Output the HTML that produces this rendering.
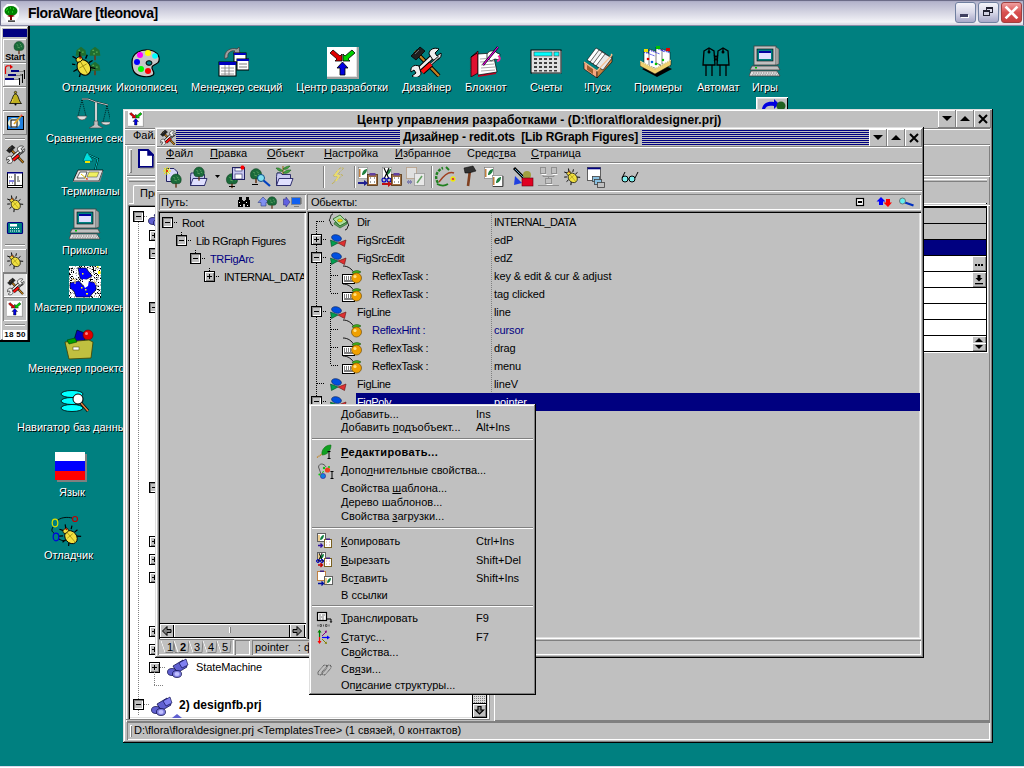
<!DOCTYPE html><html><head><meta charset="utf-8"><style>
*{box-sizing:border-box}
body{margin:0;width:1024px;height:768px;overflow:hidden;background:#008080;position:relative;font:11px "Liberation Sans",sans-serif;color:#000}
.a{position:absolute}
.g{background:#c0c0c0}
.w{background:#fff}
.r2{background:#c0c0c0;box-shadow:inset -1px -1px #000,inset 1px 1px #dfdfdf,inset -2px -2px #808080,inset 2px 2px #fff}
.r1{background:#c0c0c0;box-shadow:inset -1px -1px #808080,inset 1px 1px #fff}
.s1{box-shadow:inset 1px 1px #808080,inset -1px -1px #fff}
.s2{box-shadow:inset 1px 1px #808080,inset -1px -1px #fff,inset 2px 2px #000,inset -2px -2px #dfdfdf}
.t{white-space:nowrap;line-height:13px}
.dl{color:#fff;text-shadow:1px 1px 0 #000}
u{text-decoration:underline;text-underline-offset:1px;text-decoration-thickness:1px}
</style></head><body><div class="a" style="left:0;top:0;width:1024px;height:26px;background:linear-gradient(#9c9cb8 0,#b4b4cc 2px,#e6e6ee 18px,#f4f4f8 22px,#dcdce6 24px);box-shadow:inset 1px 1px #6c6c88,inset -1px -1px #6c6c88"></div>
<div class="a" style="left:0;top:25px;width:1024px;height:1px;background:#8a8aa6"></div>
<svg class="a" style="left:2px;top:3px" width="18" height="20" viewBox="0 0 18 20">
<polygon points="5,1 13,1 17,5 17,13 13,19 5,19 1,13 1,5" fill="#fff"/>
<ellipse cx="9" cy="8" rx="6.5" ry="5" fill="#008000"/>
<path d="M5 6h1M8 5h1M11 6h1M6 9h1M10 9h1M4 7h1" stroke="#3f3" stroke-width="1"/>
<path d="M5 13 Q9 11 13 13 L10 14 L10 17 L8 17 L8 14Z" fill="#800000"/>
<rect x="6" y="17.5" width="7" height="1.2" fill="#000"/>
</svg>
<div class="a t " style="left:28px;top:5px;font-size:14px;font-weight:bold;letter-spacing:-0.45px;line-height:16px">FloraWare [tleonova]</div>
<div class="a" style="left:955px;top:2px;width:21px;height:21px;border-radius:3px;border:1px solid #7080a0;background:linear-gradient(#f4f4fa,#d8d8e8 50%,#a8a8c8)"></div>
<div class="a" style="left:978px;top:2px;width:21px;height:21px;border-radius:3px;border:1px solid #7080a0;background:linear-gradient(#f4f4fa,#d8d8e8 50%,#a8a8c8)"></div>
<div class="a" style="left:1001px;top:2px;width:21px;height:21px;border-radius:3px;border:1px solid #a04040;background:linear-gradient(#f0a0a0,#d85050 50%,#c84040)"></div>
<div class="a" style="left:960px;top:14px;width:8px;height:3px;background:#404060;box-shadow:1px 1px #fff"></div>
<div class="a" style="left:986px;top:7px;width:7px;height:6px;border:1px solid #202030;border-top-width:2px"></div>
<div class="a" style="left:983px;top:10px;width:7px;height:6px;border:1px solid #202030;border-top-width:2px;background:#d0d0e0"></div>
<svg class="a" style="left:1001px;top:2px" width="21" height="21" viewBox="0 0 21 21"><path d="M5.5 5.5L15.5 15.5M15.5 5.5L5.5 15.5" stroke="#fff" stroke-width="2.6" stroke-linecap="square"/></svg>
<div class="a" style="left:0;top:26px;width:30px;height:316px;background:#c0c0c0;box-shadow:inset -2px -2px #000,inset 1px 1px #dfdfdf,inset -3px -3px #808080,inset 2px 2px #fff"></div>
<div class="a " style="left:3px;top:29px;width:24px;height:8px;background:#000080"></div>
<div class="a" style="left:3px;top:39px;width:24px;height:24px;background:#c0c0c0;box-shadow:inset -1px -1px #808080,inset 1px 1px #fff"></div>
<div class="a" style="left:3px;top:63px;width:24px;height:24px;background:#c0c0c0;box-shadow:inset -1px -1px #808080,inset 1px 1px #fff"></div>
<div class="a" style="left:3px;top:87px;width:24px;height:24px;background:#c0c0c0;box-shadow:inset -1px -1px #808080,inset 1px 1px #fff"></div>
<div class="a" style="left:3px;top:111px;width:24px;height:24px;background:#c0c0c0;box-shadow:inset -1px -1px #808080,inset 1px 1px #fff"></div>
<div class="a" style="left:5px;top:138px;width:20px;height:2px;box-shadow:inset 0 1px #808080,inset 0 -1px #fff"></div>
<div class="a" style="left:5px;top:244px;width:20px;height:2px;box-shadow:inset 0 1px #808080,inset 0 -1px #fff"></div>
<div class="a" style="left:3px;top:249px;width:24px;height:24px;background:#c0c0c0;box-shadow:inset -1px -1px #808080,inset 1px 1px #fff"></div>
<div class="a" style="left:3px;top:273px;width:24px;height:24px;background:#e2e2e2;box-shadow:inset 1px 1px #808080,inset -1px -1px #fff"></div>
<div class="a" style="left:3px;top:297px;width:24px;height:24px;background:#c0c0c0;box-shadow:inset 1px 1px #808080,inset -1px -1px #fff"></div>
<div class="a" style="left:5px;top:324px;width:20px;height:2px;box-shadow:inset 0 1px #808080,inset 0 -1px #fff"></div>
<div class="a" style="left:3px;top:330px;width:24px;height:10px;background:#fff"></div>
<div class="a t " style="left:3px;top:329px;font-size:8px;font-weight:bold;line-height:11px;width:24px;text-align:center;letter-spacing:0.3px">18 50</div>
<div class="a t " style="left:4px;top:52px;font-size:9px;font-weight:bold;line-height:10px;width:22px;text-align:center;letter-spacing:-0.2px">Start</div>
<svg class="a" style="left:72px;top:45px" width="32" height="32" viewBox="0 0 32 32"><g transform="translate(9,8) scale(0.9)"><rect x="-1" y="2" width="2" height="6" fill="#604020"/><path d="M0 -7 L5 -3 L6 3 L-6 3 L-5 -3Z" fill="#1f6f2f"/><path d="M-3 -3h2M1 -1h2M-2 1h2" stroke="#6fbf5f" stroke-width="1"/></g><g transform="translate(23,8) scale(0.9)"><rect x="-1" y="2" width="2" height="6" fill="#604020"/><path d="M0 -7 L5 -3 L6 3 L-6 3 L-5 -3Z" fill="#1f6f2f"/><path d="M-3 -3h2M1 -1h2M-2 1h2" stroke="#6fbf5f" stroke-width="1"/></g><g transform="translate(23,23) scale(0.9)"><rect x="-1" y="2" width="2" height="6" fill="#604020"/><path d="M0 -7 L5 -3 L6 3 L-6 3 L-5 -3Z" fill="#1f6f2f"/><path d="M-3 -3h2M1 -1h2M-2 1h2" stroke="#6fbf5f" stroke-width="1"/></g><g transform="translate(11,21) rotate(-30) scale(0.85)">
<path d="M-7 -6l-4 -3M-8 0h-5M-7 6l-4 4M7 -6l4 -3M8 0h5M7 6l4 4M-2 -11l-3 -5M2 -11l3 -5" stroke="#000" stroke-width="1.6" fill="none"/>
<ellipse cx="0" cy="2" rx="7.5" ry="9.5" fill="#f0e040" stroke="#000" stroke-width="1.2"/>
<path d="M0 -7V11M-5 0h10" stroke="#a09010" stroke-width="1"/>
<ellipse cx="0" cy="-9" rx="4" ry="3" fill="#f0e040" stroke="#000"/>
<circle cx="2" cy="-10" r="1.2" fill="#c00000"/></g></svg>
<svg class="a" style="left:129px;top:46px" width="32" height="32" viewBox="0 0 32 32"><path d="M3 16 C3 7 12 3 20 4 C28 5 31 10 30 15 C29 19 24 18 23 21 C22 24 27 26 24 29 C20 32 10 31 6 27 C3 24 3 20 3 16Z" fill="#c8c8c8" stroke="#000" stroke-width="1.2"/>
<ellipse cx="20" cy="17" rx="3" ry="2.3" fill="#008080" stroke="#000"/>
<circle cx="11" cy="9" r="3" fill="#ff00ff"/><circle cx="19" cy="7" r="3" fill="#ffff00"/><circle cx="26" cy="10" r="2.8" fill="#00ffff"/>
<circle cx="8" cy="16" r="3" fill="#0000ff"/><circle cx="12" cy="23" r="3" fill="#00ff00"/><circle cx="19" cy="25" r="3" fill="#ff0000"/></svg>
<svg class="a" style="left:217px;top:45px" width="32" height="32" viewBox="0 0 32 32"><path d="M8 14 C6 6 14 2 20 4 L22 2 L23 9 L16 8 L18 6 C14 5 10 8 11 12Z" fill="#a0a0a0" stroke="#404040" stroke-width="0.8"/>
<rect x="17" y="8" width="12" height="9" fill="#fff" stroke="#000"/><rect x="17" y="8" width="12" height="2" fill="#0000c0"/>
<rect x="20" y="14" width="12" height="11" fill="#fff" stroke="#000"/><rect x="20" y="14" width="12" height="2" fill="#0000c0"/>
<path d="M22 19h8M22 22h8" stroke="#808080"/>
<rect x="2" y="17" width="17" height="14" fill="#fff" stroke="#000"/><rect x="2" y="17" width="17" height="3" fill="#0000c0"/>
<path d="M4 23h13M4 26h13M4 29h13M8 20v10M12 20v10" stroke="#808080" stroke-width="0.8"/></svg>
<svg class="a" style="left:327px;top:47px" width="32" height="32" viewBox="0 0 32 32"><rect x="0" y="0" width="32" height="32" fill="#fff"/><path d="M0 31H32M31 0V32" stroke="#a0a0a0" stroke-width="2"/><path d="M0 29.5H30M29.5 0V30" stroke="#e0e0e0" stroke-width="1"/>
<path d="M3 6 L6 3 L13 9 L15 7 L15 14 L8 14 L10 12Z" fill="#e00000" stroke="#000" stroke-width="0.8"/>
<path d="M28 6 L25 3 L18 9 L16 7 L16 14 L23 14 L21 12Z" fill="#00d000" stroke="#000" stroke-width="0.8"/>
<path d="M15.5 15 L21 21 L18 21 L18 28 L13 28 L13 21 L10 21Z" fill="#0000e0" stroke="#000" stroke-width="0.8"/></svg>
<svg class="a" style="left:410px;top:45px" width="32" height="32" viewBox="0 0 32 32"><g transform="scale(1)">
<path d="M5 6 L29 31" stroke="#000" stroke-width="4"/><path d="M5 6 L29 31" stroke="#c08020" stroke-width="2.4"/>
<path d="M1 11 L10 2 L15 6 L6 15Z" fill="#202020" stroke="#000" stroke-width="0.8"/><path d="M5 9 L9 5" stroke="#808080" stroke-width="0.8"/>
<path d="M6 27 L23 11" stroke="#000" stroke-width="5"/><path d="M6 27 L23 11" stroke="#f0f0f0" stroke-width="3"/>
<path d="M19 9 C19 4 25 2 29 4 L25 8 L27 11 L31 8 C32 13 28 16 23 15Z" fill="#f0f0f0" stroke="#000" stroke-width="1"/>
<path d="M11 28 C11 32 5 34 2 31 L6 28 L4 25 L1 27 C0 22 4 19 9 21Z" fill="#f0f0f0" stroke="#000" stroke-width="1"/>
<path d="M21 19 L29 12" stroke="#000" stroke-width="2.6"/><path d="M21 19 L29 12" stroke="#c0c0c0" stroke-width="1.2"/>
<path d="M12 27 L21 19" stroke="#000" stroke-width="6"/><path d="M12 27 L21 19" stroke="#ff1010" stroke-width="4"/></g></svg>
<svg class="a" style="left:469px;top:45px" width="32" height="32" viewBox="0 0 32 32"><path d="M2 12 L9 6 L9 28 L2 32Z" fill="#e01030" stroke="#000" stroke-width="0.7"/>
<path d="M8 8 L2 12" stroke="#000"/><path d="M9 30 L27 27 L27 29 L9 32Z" fill="#c00020"/>
<path d="M9 9 L24 8 L28 27 L9 30Z" fill="#fff" stroke="#000" stroke-width="0.7"/>
<path d="M11 14 L24 13M11 17 L25 16M12 20 L25 19M12 23 L26 22M12 26 L26 25" stroke="#a0a0a0" stroke-width="0.9"/>
<path d="M1.5 13v17" stroke="#404040" stroke-dasharray="1 1.2" stroke-width="1.2"/>
<path d="M18 9 C20 5 26 5 28 8 L31 9 L30 15 L26 14 L22 16 L18 13Z" fill="#fff" stroke="#000" stroke-width="0.7"/>
<path d="M29 11 C32 12 31 16 28 16" stroke="#ff20a0" stroke-width="1.8" fill="none"/>
<path d="M14 20 L29 2" stroke="#000" stroke-width="2.2"/><path d="M14 20 L29 2" stroke="#ff00ff" stroke-width="1.1"/></svg>
<svg class="a" style="left:530px;top:49px" width="32" height="26" viewBox="0 0 32 26"><rect x="1" y="1" width="30" height="23" fill="#e0e0e0" stroke="#000" stroke-width="1"/><path d="M2 24H31V2" stroke="#808080" fill="none"/>
<rect x="4" y="3" width="18" height="4" fill="#00ffff" stroke="#404040" stroke-width="0.6"/><rect x="24" y="3" width="5" height="4" fill="#00ffff" stroke="#404040" stroke-width="0.6"/>
<g fill="#404040"><rect x="4" y="9" width="3" height="2"/><rect x="9" y="9" width="3" height="2"/><rect x="14" y="9" width="3" height="2"/><rect x="19" y="9" width="3" height="2"/><rect x="24" y="9" width="3" height="2"/>
<rect x="4" y="13" width="3" height="2"/><rect x="9" y="13" width="3" height="2"/><rect x="14" y="13" width="3" height="2"/><rect x="19" y="13" width="3" height="2"/><rect x="24" y="13" width="3" height="2"/>
<rect x="4" y="17" width="3" height="2"/><rect x="9" y="17" width="3" height="2"/><rect x="14" y="17" width="3" height="2"/><rect x="19" y="17" width="3" height="2"/><rect x="24" y="17" width="3" height="2"/>
<rect x="4" y="21" width="3" height="1.5"/><rect x="9" y="21" width="3" height="1.5"/><rect x="14" y="21" width="3" height="1.5"/><rect x="19" y="21" width="3" height="1.5"/><rect x="24" y="21" width="3" height="1.5"/></g></svg>
<svg class="a" style="left:583px;top:45px" width="32" height="33" viewBox="0 0 32 33"><path d="M1 17 L14 26 L14 33 L1 24Z" fill="#f8a880" stroke="#000" stroke-width="0.6"/>
<rect x="4" y="21" width="6" height="5" fill="#a06030" transform="skewY(35) translate(0,-4)"/>
<path d="M14 26 L29 10 L29 17 L14 33Z" fill="#c88040" stroke="#000" stroke-width="0.6"/>
<g stroke="#000" stroke-width="0.6"><path d="M4 15 L13 3 L20 7 L11 19Z" fill="#fff"/><path d="M7 17 L16 5 L23 9 L14 21Z" fill="#f4f4f4"/><path d="M10 19 L19 7 L26 11 L17 23Z" fill="#fff"/><path d="M13 21 L22 9 L29 13 L20 25Z" fill="#e8e8e8"/></g>
<path d="M1 17 L14 26 L29 10 L28 9" fill="none" stroke="#f8c090" stroke-width="1.2"/></svg>
<svg class="a" style="left:640px;top:45px" width="32" height="33" viewBox="0 0 32 33"><path d="M2 24 L17 32 L32 24 L17 17Z" fill="#000"/>
<g stroke="#000" stroke-width="0.5"><path d="M4 6 L15 10 L15 27 L4 23Z" fill="#fff"/><path d="M9 4 L20 8 L20 25 L9 21Z" fill="#fff"/><path d="M16 2 L25 6 L25 22 L16 18Z" fill="#fff"/><path d="M22 4 L30 7 L30 22 L22 19Z" fill="#fff"/></g>
<path d="M4 7 L15 11M9 5 L20 9M16 3 L25 7M22 5 L30 8" stroke="#0000e0" stroke-width="1" stroke-dasharray="1 1"/>
<rect x="4" y="4" width="4" height="3" fill="#f0e000"/><rect x="16" y="1" width="4" height="3" fill="#00c000"/><rect x="26" y="3" width="4" height="3" fill="#e00000"/>
<circle cx="8" cy="14" r="1.3" fill="#e00000"/><circle cx="12" cy="17" r="1.3" fill="#0060e0"/><circle cx="16" cy="19" r="1.3" fill="#00c000"/><circle cx="23" cy="15" r="1.2" fill="#00c000"/>
<path d="M0 16 L15 24 L31 15 L31 20 L15 29 L0 21Z" fill="#f0d070" stroke="#000" stroke-width="0.5"/><path d="M0 16 L15 24 L31 15" stroke="#fff0b0" fill="none"/></svg>
<svg class="a" style="left:700px;top:45px" width="32" height="32" viewBox="0 0 32 32"><g fill="none" stroke="#000" stroke-width="1.3">
<path d="M4 6 L9 3 L14 6 L15 20 L3 20Z"/><path d="M18 6 L23 3 L28 6 L29 20 L17 20Z"/>
<path d="M14 10 C17 12 17 14 14 16M18 10 C15 12 15 14 18 16"/>
<path d="M6 20v11M12 20v11M20 20v11M26 20v11"/><path d="M9 3v4M23 3v4"/></g>
<circle cx="9" cy="7" r="1.5" fill="#000"/><circle cx="23" cy="7" r="1.5" fill="#000"/></svg>
<svg class="a" style="left:749px;top:45px" width="32" height="32" viewBox="0 0 32 32"><rect x="5" y="1" width="22" height="19" fill="#c0c0c0" stroke="#404040" stroke-width="0.8"/><path d="M27 2 L30 4 L30 19 L27 20" fill="#a0a0a0" stroke="#404040" stroke-width="0.6"/>
<rect x="8" y="4" width="16" height="12" fill="#008080" stroke="#000" stroke-width="0.6"/><rect x="10" y="6" width="12" height="8" fill="#e0e0ff"/><rect x="10" y="6" width="12" height="2" fill="#0000a0"/>
<path d="M3 21 L29 21 L31 25 L1 25Z" fill="#c0c0c0" stroke="#404040" stroke-width="0.8"/><rect x="6" y="22" width="2" height="1.5" fill="#00c000"/>
<path d="M2 26 L28 26 L31 31 L0 31Z" fill="#e0e0e0" stroke="#404040" stroke-width="0.8"/><path d="M4 28h24M3 30h26" stroke="#808080" stroke-dasharray="1.5 1"/></svg>
<div class="a" style="left:756px;top:97px;width:32px;height:14px;background:#c0c0c0;box-shadow:inset 1px 1px #fff,inset -1px 0 #000,inset 2px 2px #dfdfdf"></div>
<svg class="a" style="left:760px;top:99px" width="26" height="10" viewBox="0 0 26 10"><path d="M2 10 C3 4 8 2 14 3 L14 0 L19 5 L14 10 L14 7 C9 6 6 7 5 10Z" fill="#0000e0"/><circle cx="21" cy="7" r="4.5" fill="#206020"/></svg>
<svg class="a" style="left:76px;top:97px" width="34" height="32" viewBox="0 0 34 32"><path d="M6 2 L12 2 L20 5 L32 8" stroke="#000" stroke-width="1.6" fill="none"/><path d="M6 2 L12 2 L20 5 L32 8" stroke="#fff" stroke-width="0.8" fill="none"/>
<rect x="19" y="5" width="2" height="22" fill="#fff" stroke="#404040" stroke-width="0.5"/>
<path d="M13 31 L18 28 L18 24 L22 24 L22 28 L27 31Z" fill="#c0c0c0" stroke="#404040" stroke-width="0.6"/>
<path d="M6 3 L2 19M6 3 L10 19M31 9 L27 25M31 9 L35 25" stroke="#000" stroke-dasharray="1 1" stroke-width="0.8"/>
<path d="M1 19 L11 19 Q10 23 6 23 Q2 23 1 19Z" fill="#e0e0e0" stroke="#404040" stroke-width="0.6"/><path d="M25 25 L35 25 Q34 28 30 28 Q26 28 25 25Z" fill="#e0e0e0" stroke="#404040" stroke-width="0.6"/></svg>
<svg class="a" style="left:73px;top:150px" width="32" height="32" viewBox="0 0 32 32"><path d="M14 2 L17 6 L20 11 L10 11 L12 6Z" fill="#00e0e0" stroke="#004040" stroke-width="0.6"/><rect x="12" y="11" width="5" height="2" fill="#f0e000"/>
<path d="M16 5 L25 9 L22 20" stroke="#000" stroke-width="1.8" fill="none"/><path d="M16 5 L25 9 L22 20" stroke="#00e0e0" stroke-width="0.9" fill="none"/>
<path d="M5 20 L30 20 L26 31 L0 31Z" fill="#e0e0e0" stroke="#000" stroke-width="0.7"/><path d="M0 31 L26 31 L30 20 L30 22 L27 32 L0 32Z" fill="#808080"/>
<path d="M7 22 L14 22 L12 28 L4 28Z" fill="#fff" stroke="#000" stroke-width="0.6"/><path d="M16 22 L26 22 L24 27 L14 27Z" fill="#f0f060" stroke="#404040" stroke-width="0.5"/>
<path d="M8 24 L14 29" stroke="#e0c000" stroke-width="1"/><circle cx="14" cy="29" r="0.8" fill="#e00000"/></svg>
<svg class="a" style="left:69px;top:208px" width="32" height="32" viewBox="0 0 32 32"><rect x="5" y="1" width="22" height="19" fill="#c0c0c0" stroke="#404040" stroke-width="0.8"/><path d="M27 2 L30 4 L30 19 L27 20" fill="#a0a0a0" stroke="#404040" stroke-width="0.6"/>
<rect x="8" y="4" width="16" height="12" fill="#008080" stroke="#000" stroke-width="0.6"/><rect x="10" y="6" width="12" height="8" fill="#e0e0ff"/><rect x="10" y="6" width="12" height="2" fill="#0000a0"/>
<path d="M3 21 L29 21 L31 25 L1 25Z" fill="#c0c0c0" stroke="#404040" stroke-width="0.8"/><rect x="6" y="22" width="2" height="1.5" fill="#00c000"/>
<path d="M2 26 L28 26 L31 31 L0 31Z" fill="#e0e0e0" stroke="#404040" stroke-width="0.8"/><path d="M4 28h24M3 30h26" stroke="#808080" stroke-dasharray="1.5 1"/></svg>
<svg class="a" style="left:69px;top:266px" width="32" height="32" viewBox="0 0 32 32"><rect x="0" y="0" width="32" height="32" fill="#fff"/><rect x="6" y="0" width="1" height="1" fill="#a8a8a8"/><rect x="10" y="0" width="1" height="1" fill="#000"/><rect x="11" y="0" width="1" height="1" fill="#a8a8a8"/><rect x="12" y="0" width="1" height="1" fill="#000"/><rect x="15" y="0" width="1" height="1" fill="#000"/><rect x="20" y="0" width="1" height="1" fill="#a8a8a8"/><rect x="21" y="0" width="1" height="1" fill="#000"/><rect x="23" y="0" width="1" height="1" fill="#000"/><rect x="24" y="0" width="1" height="1" fill="#a8a8a8"/><rect x="25" y="0" width="1" height="1" fill="#a8a8a8"/><rect x="26" y="0" width="1" height="1" fill="#000"/><rect x="28" y="0" width="1" height="1" fill="#a8a8a8"/><rect x="3" y="1" width="1" height="1" fill="#a8a8a8"/><rect x="8" y="1" width="1" height="1" fill="#a8a8a8"/><rect x="9" y="1" width="1" height="1" fill="#a8a8a8"/><rect x="10" y="1" width="1" height="1" fill="#a8a8a8"/><rect x="11" y="1" width="1" height="1" fill="#000"/><rect x="13" y="1" width="1" height="1" fill="#a8a8a8"/><rect x="15" y="1" width="1" height="1" fill="#a8a8a8"/><rect x="18" y="1" width="1" height="1" fill="#000"/><rect x="19" y="1" width="1" height="1" fill="#a8a8a8"/><rect x="23" y="1" width="1" height="1" fill="#a8a8a8"/><rect x="24" y="1" width="1" height="1" fill="#000"/><rect x="27" y="1" width="1" height="1" fill="#a8a8a8"/><rect x="28" y="1" width="1" height="1" fill="#000"/><rect x="29" y="1" width="1" height="1" fill="#a8a8a8"/><rect x="0" y="2" width="1" height="1" fill="#000"/><rect x="1" y="2" width="1" height="1" fill="#a8a8a8"/><rect x="2" y="2" width="1" height="1" fill="#000"/><rect x="3" y="2" width="1" height="1" fill="#000"/><rect x="5" y="2" width="1" height="1" fill="#a8a8a8"/><rect x="7" y="2" width="1" height="1" fill="#a8a8a8"/><rect x="8" y="2" width="1" height="1" fill="#a8a8a8"/><rect x="10" y="2" width="1" height="1" fill="#000"/><rect x="12" y="2" width="1" height="1" fill="#000"/><rect x="13" y="2" width="1" height="1" fill="#a8a8a8"/><rect x="14" y="2" width="1" height="1" fill="#a8a8a8"/><rect x="15" y="2" width="1" height="1" fill="#a8a8a8"/><rect x="18" y="2" width="1" height="1" fill="#a8a8a8"/><rect x="20" y="2" width="1" height="1" fill="#a8a8a8"/><rect x="21" y="2" width="1" height="1" fill="#a8a8a8"/><rect x="24" y="2" width="1" height="1" fill="#000"/><rect x="26" y="2" width="1" height="1" fill="#a8a8a8"/><rect x="27" y="2" width="1" height="1" fill="#a8a8a8"/><rect x="29" y="2" width="1" height="1" fill="#a8a8a8"/><rect x="30" y="2" width="1" height="1" fill="#a8a8a8"/><rect x="31" y="2" width="1" height="1" fill="#000"/><rect x="0" y="3" width="1" height="1" fill="#000"/><rect x="2" y="3" width="1" height="1" fill="#a8a8a8"/><rect x="4" y="3" width="1" height="1" fill="#a8a8a8"/><rect x="10" y="3" width="1" height="1" fill="#a8a8a8"/><rect x="11" y="3" width="1" height="1" fill="#a8a8a8"/><rect x="14" y="3" width="1" height="1" fill="#a8a8a8"/><rect x="15" y="3" width="1" height="1" fill="#a8a8a8"/><rect x="18" y="3" width="1" height="1" fill="#a8a8a8"/><rect x="22" y="3" width="1" height="1" fill="#a8a8a8"/><rect x="23" y="3" width="1" height="1" fill="#000"/><rect x="24" y="3" width="1" height="1" fill="#000"/><rect x="26" y="3" width="1" height="1" fill="#a8a8a8"/><rect x="28" y="3" width="1" height="1" fill="#a8a8a8"/><rect x="31" y="3" width="1" height="1" fill="#a8a8a8"/><rect x="0" y="4" width="1" height="1" fill="#a8a8a8"/><rect x="2" y="4" width="1" height="1" fill="#000"/><rect x="3" y="4" width="1" height="1" fill="#a8a8a8"/><rect x="7" y="4" width="1" height="1" fill="#a8a8a8"/><rect x="9" y="4" width="1" height="1" fill="#a8a8a8"/><rect x="10" y="4" width="1" height="1" fill="#000"/><rect x="11" y="4" width="1" height="1" fill="#a8a8a8"/><rect x="12" y="4" width="1" height="1" fill="#a8a8a8"/><rect x="13" y="4" width="1" height="1" fill="#000"/><rect x="14" y="4" width="1" height="1" fill="#a8a8a8"/><rect x="15" y="4" width="1" height="1" fill="#a8a8a8"/><rect x="17" y="4" width="1" height="1" fill="#000"/><rect x="18" y="4" width="1" height="1" fill="#a8a8a8"/><rect x="24" y="4" width="1" height="1" fill="#000"/><rect x="25" y="4" width="1" height="1" fill="#000"/><rect x="26" y="4" width="1" height="1" fill="#000"/><rect x="30" y="4" width="1" height="1" fill="#000"/><rect x="2" y="5" width="1" height="1" fill="#a8a8a8"/><rect x="4" y="5" width="1" height="1" fill="#000"/><rect x="12" y="5" width="1" height="1" fill="#a8a8a8"/><rect x="16" y="5" width="1" height="1" fill="#a8a8a8"/><rect x="21" y="5" width="1" height="1" fill="#a8a8a8"/><rect x="24" y="5" width="1" height="1" fill="#000"/><rect x="29" y="5" width="1" height="1" fill="#a8a8a8"/><rect x="0" y="6" width="1" height="1" fill="#a8a8a8"/><rect x="2" y="6" width="1" height="1" fill="#000"/><rect x="4" y="6" width="1" height="1" fill="#000"/><rect x="7" y="6" width="1" height="1" fill="#a8a8a8"/><rect x="12" y="6" width="1" height="1" fill="#a8a8a8"/><rect x="13" y="6" width="1" height="1" fill="#000"/><rect x="14" y="6" width="1" height="1" fill="#a8a8a8"/><rect x="16" y="6" width="1" height="1" fill="#a8a8a8"/><rect x="17" y="6" width="1" height="1" fill="#a8a8a8"/><rect x="20" y="6" width="1" height="1" fill="#a8a8a8"/><rect x="22" y="6" width="1" height="1" fill="#a8a8a8"/><rect x="24" y="6" width="1" height="1" fill="#a8a8a8"/><rect x="25" y="6" width="1" height="1" fill="#a8a8a8"/><rect x="29" y="6" width="1" height="1" fill="#a8a8a8"/><rect x="31" y="6" width="1" height="1" fill="#a8a8a8"/><rect x="0" y="7" width="1" height="1" fill="#000"/><rect x="6" y="7" width="1" height="1" fill="#a8a8a8"/><rect x="7" y="7" width="1" height="1" fill="#a8a8a8"/><rect x="9" y="7" width="1" height="1" fill="#a8a8a8"/><rect x="10" y="7" width="1" height="1" fill="#a8a8a8"/><rect x="11" y="7" width="1" height="1" fill="#a8a8a8"/><rect x="14" y="7" width="1" height="1" fill="#a8a8a8"/><rect x="18" y="7" width="1" height="1" fill="#000"/><rect x="19" y="7" width="1" height="1" fill="#000"/><rect x="21" y="7" width="1" height="1" fill="#000"/><rect x="24" y="7" width="1" height="1" fill="#a8a8a8"/><rect x="26" y="7" width="1" height="1" fill="#000"/><rect x="27" y="7" width="1" height="1" fill="#000"/><rect x="29" y="7" width="1" height="1" fill="#000"/><rect x="31" y="7" width="1" height="1" fill="#a8a8a8"/><rect x="0" y="8" width="1" height="1" fill="#000"/><rect x="1" y="8" width="1" height="1" fill="#000"/><rect x="3" y="8" width="1" height="1" fill="#a8a8a8"/><rect x="9" y="8" width="1" height="1" fill="#a8a8a8"/><rect x="11" y="8" width="1" height="1" fill="#a8a8a8"/><rect x="12" y="8" width="1" height="1" fill="#000"/><rect x="15" y="8" width="1" height="1" fill="#a8a8a8"/><rect x="16" y="8" width="1" height="1" fill="#a8a8a8"/><rect x="17" y="8" width="1" height="1" fill="#a8a8a8"/><rect x="22" y="8" width="1" height="1" fill="#a8a8a8"/><rect x="25" y="8" width="1" height="1" fill="#000"/><rect x="28" y="8" width="1" height="1" fill="#000"/><rect x="0" y="9" width="1" height="1" fill="#a8a8a8"/><rect x="7" y="9" width="1" height="1" fill="#a8a8a8"/><rect x="12" y="9" width="1" height="1" fill="#a8a8a8"/><rect x="18" y="9" width="1" height="1" fill="#a8a8a8"/><rect x="21" y="9" width="1" height="1" fill="#a8a8a8"/><rect x="22" y="9" width="1" height="1" fill="#000"/><rect x="23" y="9" width="1" height="1" fill="#a8a8a8"/><rect x="27" y="9" width="1" height="1" fill="#000"/><rect x="29" y="9" width="1" height="1" fill="#000"/><rect x="31" y="9" width="1" height="1" fill="#a8a8a8"/><rect x="0" y="10" width="1" height="1" fill="#a8a8a8"/><rect x="2" y="10" width="1" height="1" fill="#000"/><rect x="3" y="10" width="1" height="1" fill="#000"/><rect x="11" y="10" width="1" height="1" fill="#000"/><rect x="12" y="10" width="1" height="1" fill="#a8a8a8"/><rect x="14" y="10" width="1" height="1" fill="#a8a8a8"/><rect x="20" y="10" width="1" height="1" fill="#a8a8a8"/><rect x="21" y="10" width="1" height="1" fill="#a8a8a8"/><rect x="24" y="10" width="1" height="1" fill="#a8a8a8"/><rect x="29" y="10" width="1" height="1" fill="#a8a8a8"/><rect x="1" y="11" width="1" height="1" fill="#000"/><rect x="4" y="11" width="1" height="1" fill="#a8a8a8"/><rect x="9" y="11" width="1" height="1" fill="#000"/><rect x="11" y="11" width="1" height="1" fill="#a8a8a8"/><rect x="14" y="11" width="1" height="1" fill="#a8a8a8"/><rect x="16" y="11" width="1" height="1" fill="#000"/><rect x="17" y="11" width="1" height="1" fill="#a8a8a8"/><rect x="21" y="11" width="1" height="1" fill="#a8a8a8"/><rect x="22" y="11" width="1" height="1" fill="#a8a8a8"/><rect x="25" y="11" width="1" height="1" fill="#000"/><rect x="27" y="11" width="1" height="1" fill="#000"/><rect x="28" y="11" width="1" height="1" fill="#a8a8a8"/><rect x="29" y="11" width="1" height="1" fill="#a8a8a8"/><rect x="31" y="11" width="1" height="1" fill="#a8a8a8"/><rect x="0" y="12" width="1" height="1" fill="#a8a8a8"/><rect x="2" y="12" width="1" height="1" fill="#000"/><rect x="4" y="12" width="1" height="1" fill="#000"/><rect x="6" y="12" width="1" height="1" fill="#a8a8a8"/><rect x="7" y="12" width="1" height="1" fill="#a8a8a8"/><rect x="9" y="12" width="1" height="1" fill="#a8a8a8"/><rect x="10" y="12" width="1" height="1" fill="#a8a8a8"/><rect x="11" y="12" width="1" height="1" fill="#a8a8a8"/><rect x="13" y="12" width="1" height="1" fill="#a8a8a8"/><rect x="14" y="12" width="1" height="1" fill="#a8a8a8"/><rect x="21" y="12" width="1" height="1" fill="#a8a8a8"/><rect x="25" y="12" width="1" height="1" fill="#a8a8a8"/><rect x="26" y="12" width="1" height="1" fill="#a8a8a8"/><rect x="28" y="12" width="1" height="1" fill="#a8a8a8"/><rect x="31" y="12" width="1" height="1" fill="#000"/><rect x="0" y="13" width="1" height="1" fill="#a8a8a8"/><rect x="2" y="13" width="1" height="1" fill="#a8a8a8"/><rect x="3" y="13" width="1" height="1" fill="#000"/><rect x="5" y="13" width="1" height="1" fill="#a8a8a8"/><rect x="7" y="13" width="1" height="1" fill="#000"/><rect x="8" y="13" width="1" height="1" fill="#a8a8a8"/><rect x="10" y="13" width="1" height="1" fill="#000"/><rect x="11" y="13" width="1" height="1" fill="#a8a8a8"/><rect x="15" y="13" width="1" height="1" fill="#000"/><rect x="20" y="13" width="1" height="1" fill="#a8a8a8"/><rect x="21" y="13" width="1" height="1" fill="#000"/><rect x="22" y="13" width="1" height="1" fill="#000"/><rect x="23" y="13" width="1" height="1" fill="#000"/><rect x="27" y="13" width="1" height="1" fill="#000"/><rect x="28" y="13" width="1" height="1" fill="#a8a8a8"/><rect x="29" y="13" width="1" height="1" fill="#a8a8a8"/><rect x="1" y="14" width="1" height="1" fill="#000"/><rect x="2" y="14" width="1" height="1" fill="#000"/><rect x="6" y="14" width="1" height="1" fill="#a8a8a8"/><rect x="9" y="14" width="1" height="1" fill="#a8a8a8"/><rect x="11" y="14" width="1" height="1" fill="#000"/><rect x="14" y="14" width="1" height="1" fill="#a8a8a8"/><rect x="17" y="14" width="1" height="1" fill="#a8a8a8"/><rect x="18" y="14" width="1" height="1" fill="#a8a8a8"/><rect x="19" y="14" width="1" height="1" fill="#a8a8a8"/><rect x="21" y="14" width="1" height="1" fill="#000"/><rect x="27" y="14" width="1" height="1" fill="#a8a8a8"/><rect x="0" y="15" width="1" height="1" fill="#a8a8a8"/><rect x="5" y="15" width="1" height="1" fill="#a8a8a8"/><rect x="11" y="15" width="1" height="1" fill="#a8a8a8"/><rect x="13" y="15" width="1" height="1" fill="#000"/><rect x="14" y="15" width="1" height="1" fill="#a8a8a8"/><rect x="16" y="15" width="1" height="1" fill="#000"/><rect x="17" y="15" width="1" height="1" fill="#a8a8a8"/><rect x="20" y="15" width="1" height="1" fill="#a8a8a8"/><rect x="23" y="15" width="1" height="1" fill="#a8a8a8"/><rect x="27" y="15" width="1" height="1" fill="#a8a8a8"/><rect x="1" y="16" width="1" height="1" fill="#000"/><rect x="4" y="16" width="1" height="1" fill="#a8a8a8"/><rect x="5" y="16" width="1" height="1" fill="#a8a8a8"/><rect x="6" y="16" width="1" height="1" fill="#000"/><rect x="7" y="16" width="1" height="1" fill="#a8a8a8"/><rect x="8" y="16" width="1" height="1" fill="#a8a8a8"/><rect x="9" y="16" width="1" height="1" fill="#000"/><rect x="10" y="16" width="1" height="1" fill="#a8a8a8"/><rect x="19" y="16" width="1" height="1" fill="#000"/><rect x="22" y="16" width="1" height="1" fill="#000"/><rect x="24" y="16" width="1" height="1" fill="#a8a8a8"/><rect x="26" y="16" width="1" height="1" fill="#a8a8a8"/><rect x="29" y="16" width="1" height="1" fill="#000"/><rect x="31" y="16" width="1" height="1" fill="#a8a8a8"/><rect x="2" y="17" width="1" height="1" fill="#a8a8a8"/><rect x="3" y="17" width="1" height="1" fill="#a8a8a8"/><rect x="6" y="17" width="1" height="1" fill="#a8a8a8"/><rect x="8" y="17" width="1" height="1" fill="#a8a8a8"/><rect x="9" y="17" width="1" height="1" fill="#000"/><rect x="10" y="17" width="1" height="1" fill="#a8a8a8"/><rect x="11" y="17" width="1" height="1" fill="#000"/><rect x="12" y="17" width="1" height="1" fill="#a8a8a8"/><rect x="14" y="17" width="1" height="1" fill="#a8a8a8"/><rect x="17" y="17" width="1" height="1" fill="#000"/><rect x="20" y="17" width="1" height="1" fill="#000"/><rect x="22" y="17" width="1" height="1" fill="#a8a8a8"/><rect x="25" y="17" width="1" height="1" fill="#a8a8a8"/><rect x="1" y="18" width="1" height="1" fill="#000"/><rect x="4" y="18" width="1" height="1" fill="#a8a8a8"/><rect x="5" y="18" width="1" height="1" fill="#000"/><rect x="7" y="18" width="1" height="1" fill="#000"/><rect x="8" y="18" width="1" height="1" fill="#a8a8a8"/><rect x="11" y="18" width="1" height="1" fill="#a8a8a8"/><rect x="13" y="18" width="1" height="1" fill="#a8a8a8"/><rect x="19" y="18" width="1" height="1" fill="#a8a8a8"/><rect x="20" y="18" width="1" height="1" fill="#000"/><rect x="24" y="18" width="1" height="1" fill="#a8a8a8"/><rect x="25" y="18" width="1" height="1" fill="#a8a8a8"/><rect x="31" y="18" width="1" height="1" fill="#a8a8a8"/><rect x="0" y="19" width="1" height="1" fill="#a8a8a8"/><rect x="4" y="19" width="1" height="1" fill="#000"/><rect x="5" y="19" width="1" height="1" fill="#000"/><rect x="6" y="19" width="1" height="1" fill="#a8a8a8"/><rect x="7" y="19" width="1" height="1" fill="#a8a8a8"/><rect x="9" y="19" width="1" height="1" fill="#000"/><rect x="11" y="19" width="1" height="1" fill="#000"/><rect x="12" y="19" width="1" height="1" fill="#000"/><rect x="16" y="19" width="1" height="1" fill="#a8a8a8"/><rect x="18" y="19" width="1" height="1" fill="#a8a8a8"/><rect x="19" y="19" width="1" height="1" fill="#a8a8a8"/><rect x="22" y="19" width="1" height="1" fill="#000"/><rect x="23" y="19" width="1" height="1" fill="#000"/><rect x="27" y="19" width="1" height="1" fill="#a8a8a8"/><rect x="28" y="19" width="1" height="1" fill="#a8a8a8"/><rect x="29" y="19" width="1" height="1" fill="#a8a8a8"/><rect x="31" y="19" width="1" height="1" fill="#a8a8a8"/><rect x="2" y="20" width="1" height="1" fill="#a8a8a8"/><rect x="6" y="20" width="1" height="1" fill="#a8a8a8"/><rect x="7" y="20" width="1" height="1" fill="#a8a8a8"/><rect x="8" y="20" width="1" height="1" fill="#000"/><rect x="10" y="20" width="1" height="1" fill="#000"/><rect x="11" y="20" width="1" height="1" fill="#000"/><rect x="15" y="20" width="1" height="1" fill="#a8a8a8"/><rect x="17" y="20" width="1" height="1" fill="#000"/><rect x="18" y="20" width="1" height="1" fill="#a8a8a8"/><rect x="20" y="20" width="1" height="1" fill="#000"/><rect x="21" y="20" width="1" height="1" fill="#a8a8a8"/><rect x="24" y="20" width="1" height="1" fill="#a8a8a8"/><rect x="25" y="20" width="1" height="1" fill="#000"/><rect x="26" y="20" width="1" height="1" fill="#a8a8a8"/><rect x="28" y="20" width="1" height="1" fill="#a8a8a8"/><rect x="29" y="20" width="1" height="1" fill="#000"/><rect x="3" y="21" width="1" height="1" fill="#a8a8a8"/><rect x="5" y="21" width="1" height="1" fill="#a8a8a8"/><rect x="6" y="21" width="1" height="1" fill="#a8a8a8"/><rect x="7" y="21" width="1" height="1" fill="#a8a8a8"/><rect x="10" y="21" width="1" height="1" fill="#a8a8a8"/><rect x="11" y="21" width="1" height="1" fill="#a8a8a8"/><rect x="12" y="21" width="1" height="1" fill="#a8a8a8"/><rect x="13" y="21" width="1" height="1" fill="#a8a8a8"/><rect x="14" y="21" width="1" height="1" fill="#a8a8a8"/><rect x="15" y="21" width="1" height="1" fill="#a8a8a8"/><rect x="16" y="21" width="1" height="1" fill="#a8a8a8"/><rect x="22" y="21" width="1" height="1" fill="#a8a8a8"/><rect x="25" y="21" width="1" height="1" fill="#a8a8a8"/><rect x="26" y="21" width="1" height="1" fill="#000"/><rect x="1" y="22" width="1" height="1" fill="#000"/><rect x="4" y="22" width="1" height="1" fill="#000"/><rect x="5" y="22" width="1" height="1" fill="#000"/><rect x="8" y="22" width="1" height="1" fill="#000"/><rect x="10" y="22" width="1" height="1" fill="#000"/><rect x="13" y="22" width="1" height="1" fill="#a8a8a8"/><rect x="14" y="22" width="1" height="1" fill="#a8a8a8"/><rect x="18" y="22" width="1" height="1" fill="#a8a8a8"/><rect x="19" y="22" width="1" height="1" fill="#a8a8a8"/><rect x="27" y="22" width="1" height="1" fill="#a8a8a8"/><rect x="7" y="23" width="1" height="1" fill="#a8a8a8"/><rect x="8" y="23" width="1" height="1" fill="#a8a8a8"/><rect x="9" y="23" width="1" height="1" fill="#000"/><rect x="12" y="23" width="1" height="1" fill="#a8a8a8"/><rect x="13" y="23" width="1" height="1" fill="#a8a8a8"/><rect x="14" y="23" width="1" height="1" fill="#a8a8a8"/><rect x="15" y="23" width="1" height="1" fill="#a8a8a8"/><rect x="16" y="23" width="1" height="1" fill="#a8a8a8"/><rect x="18" y="23" width="1" height="1" fill="#000"/><rect x="19" y="23" width="1" height="1" fill="#a8a8a8"/><rect x="20" y="23" width="1" height="1" fill="#000"/><rect x="23" y="23" width="1" height="1" fill="#a8a8a8"/><rect x="24" y="23" width="1" height="1" fill="#000"/><rect x="28" y="23" width="1" height="1" fill="#000"/><rect x="29" y="23" width="1" height="1" fill="#000"/><rect x="30" y="23" width="1" height="1" fill="#a8a8a8"/><rect x="31" y="23" width="1" height="1" fill="#a8a8a8"/><rect x="0" y="24" width="1" height="1" fill="#a8a8a8"/><rect x="3" y="24" width="1" height="1" fill="#a8a8a8"/><rect x="4" y="24" width="1" height="1" fill="#a8a8a8"/><rect x="5" y="24" width="1" height="1" fill="#a8a8a8"/><rect x="6" y="24" width="1" height="1" fill="#a8a8a8"/><rect x="8" y="24" width="1" height="1" fill="#a8a8a8"/><rect x="12" y="24" width="1" height="1" fill="#a8a8a8"/><rect x="15" y="24" width="1" height="1" fill="#a8a8a8"/><rect x="19" y="24" width="1" height="1" fill="#a8a8a8"/><rect x="20" y="24" width="1" height="1" fill="#000"/><rect x="23" y="24" width="1" height="1" fill="#a8a8a8"/><rect x="26" y="24" width="1" height="1" fill="#a8a8a8"/><rect x="29" y="24" width="1" height="1" fill="#a8a8a8"/><rect x="30" y="24" width="1" height="1" fill="#000"/><rect x="0" y="25" width="1" height="1" fill="#a8a8a8"/><rect x="4" y="25" width="1" height="1" fill="#a8a8a8"/><rect x="5" y="25" width="1" height="1" fill="#a8a8a8"/><rect x="6" y="25" width="1" height="1" fill="#a8a8a8"/><rect x="7" y="25" width="1" height="1" fill="#a8a8a8"/><rect x="12" y="25" width="1" height="1" fill="#a8a8a8"/><rect x="14" y="25" width="1" height="1" fill="#a8a8a8"/><rect x="16" y="25" width="1" height="1" fill="#000"/><rect x="20" y="25" width="1" height="1" fill="#000"/><rect x="21" y="25" width="1" height="1" fill="#a8a8a8"/><rect x="23" y="25" width="1" height="1" fill="#000"/><rect x="29" y="25" width="1" height="1" fill="#a8a8a8"/><rect x="31" y="25" width="1" height="1" fill="#a8a8a8"/><rect x="1" y="26" width="1" height="1" fill="#000"/><rect x="3" y="26" width="1" height="1" fill="#a8a8a8"/><rect x="6" y="26" width="1" height="1" fill="#a8a8a8"/><rect x="8" y="26" width="1" height="1" fill="#a8a8a8"/><rect x="9" y="26" width="1" height="1" fill="#a8a8a8"/><rect x="10" y="26" width="1" height="1" fill="#000"/><rect x="11" y="26" width="1" height="1" fill="#a8a8a8"/><rect x="14" y="26" width="1" height="1" fill="#a8a8a8"/><rect x="16" y="26" width="1" height="1" fill="#000"/><rect x="17" y="26" width="1" height="1" fill="#a8a8a8"/><rect x="22" y="26" width="1" height="1" fill="#000"/><rect x="23" y="26" width="1" height="1" fill="#a8a8a8"/><rect x="25" y="26" width="1" height="1" fill="#a8a8a8"/><rect x="28" y="26" width="1" height="1" fill="#000"/><rect x="31" y="26" width="1" height="1" fill="#a8a8a8"/><rect x="1" y="27" width="1" height="1" fill="#a8a8a8"/><rect x="2" y="27" width="1" height="1" fill="#a8a8a8"/><rect x="4" y="27" width="1" height="1" fill="#a8a8a8"/><rect x="5" y="27" width="1" height="1" fill="#a8a8a8"/><rect x="6" y="27" width="1" height="1" fill="#a8a8a8"/><rect x="8" y="27" width="1" height="1" fill="#a8a8a8"/><rect x="9" y="27" width="1" height="1" fill="#a8a8a8"/><rect x="11" y="27" width="1" height="1" fill="#a8a8a8"/><rect x="15" y="27" width="1" height="1" fill="#a8a8a8"/><rect x="17" y="27" width="1" height="1" fill="#000"/><rect x="18" y="27" width="1" height="1" fill="#000"/><rect x="19" y="27" width="1" height="1" fill="#000"/><rect x="22" y="27" width="1" height="1" fill="#a8a8a8"/><rect x="23" y="27" width="1" height="1" fill="#a8a8a8"/><rect x="26" y="27" width="1" height="1" fill="#000"/><rect x="27" y="27" width="1" height="1" fill="#a8a8a8"/><rect x="28" y="27" width="1" height="1" fill="#a8a8a8"/><rect x="29" y="27" width="1" height="1" fill="#000"/><rect x="30" y="27" width="1" height="1" fill="#a8a8a8"/><rect x="31" y="27" width="1" height="1" fill="#000"/><rect x="1" y="28" width="1" height="1" fill="#a8a8a8"/><rect x="6" y="28" width="1" height="1" fill="#a8a8a8"/><rect x="7" y="28" width="1" height="1" fill="#a8a8a8"/><rect x="8" y="28" width="1" height="1" fill="#a8a8a8"/><rect x="9" y="28" width="1" height="1" fill="#000"/><rect x="10" y="28" width="1" height="1" fill="#a8a8a8"/><rect x="16" y="28" width="1" height="1" fill="#000"/><rect x="17" y="28" width="1" height="1" fill="#a8a8a8"/><rect x="18" y="28" width="1" height="1" fill="#a8a8a8"/><rect x="20" y="28" width="1" height="1" fill="#000"/><rect x="21" y="28" width="1" height="1" fill="#a8a8a8"/><rect x="26" y="28" width="1" height="1" fill="#a8a8a8"/><rect x="30" y="28" width="1" height="1" fill="#a8a8a8"/><rect x="0" y="29" width="1" height="1" fill="#000"/><rect x="6" y="29" width="1" height="1" fill="#a8a8a8"/><rect x="9" y="29" width="1" height="1" fill="#a8a8a8"/><rect x="10" y="29" width="1" height="1" fill="#000"/><rect x="11" y="29" width="1" height="1" fill="#a8a8a8"/><rect x="14" y="29" width="1" height="1" fill="#a8a8a8"/><rect x="16" y="29" width="1" height="1" fill="#a8a8a8"/><rect x="18" y="29" width="1" height="1" fill="#000"/><rect x="20" y="29" width="1" height="1" fill="#000"/><rect x="25" y="29" width="1" height="1" fill="#a8a8a8"/><rect x="30" y="29" width="1" height="1" fill="#000"/><rect x="0" y="30" width="1" height="1" fill="#a8a8a8"/><rect x="2" y="30" width="1" height="1" fill="#a8a8a8"/><rect x="5" y="30" width="1" height="1" fill="#a8a8a8"/><rect x="7" y="30" width="1" height="1" fill="#000"/><rect x="8" y="30" width="1" height="1" fill="#000"/><rect x="9" y="30" width="1" height="1" fill="#a8a8a8"/><rect x="13" y="30" width="1" height="1" fill="#a8a8a8"/><rect x="16" y="30" width="1" height="1" fill="#a8a8a8"/><rect x="19" y="30" width="1" height="1" fill="#000"/><rect x="20" y="30" width="1" height="1" fill="#a8a8a8"/><rect x="22" y="30" width="1" height="1" fill="#000"/><rect x="23" y="30" width="1" height="1" fill="#a8a8a8"/><rect x="25" y="30" width="1" height="1" fill="#a8a8a8"/><rect x="27" y="30" width="1" height="1" fill="#a8a8a8"/><rect x="29" y="30" width="1" height="1" fill="#a8a8a8"/><rect x="31" y="30" width="1" height="1" fill="#000"/><rect x="1" y="31" width="1" height="1" fill="#000"/><rect x="5" y="31" width="1" height="1" fill="#a8a8a8"/><rect x="14" y="31" width="1" height="1" fill="#a8a8a8"/><rect x="15" y="31" width="1" height="1" fill="#a8a8a8"/><rect x="20" y="31" width="1" height="1" fill="#a8a8a8"/><rect x="22" y="31" width="1" height="1" fill="#a8a8a8"/><rect x="23" y="31" width="1" height="1" fill="#000"/><rect x="29" y="31" width="1" height="1" fill="#a8a8a8"/><rect x="31" y="31" width="1" height="1" fill="#000"/>
<path d="M9 2 L17 2 L23 10 L15 15 L11 12Z" fill="#0000ff" stroke="#000" stroke-width="0.6"/>
<path d="M1 17 L10 15 L14 20 L18 15 L27 17 L27 24 L23 28 L21 31 L7 31 L5 25 L1 22Z" fill="#0000ff" stroke="#000" stroke-width="0.6"/>
<path d="M14 13 L20 14 L19 20 L16 22 L14 18Z" fill="#fff"/>
<rect x="13" y="7" width="1.5" height="1.5" fill="#ff0"/><rect x="12" y="21" width="1.5" height="1.5" fill="#ff0"/><rect x="16" y="23" width="1.5" height="1.5" fill="#ff0"/><rect x="17" y="27" width="2" height="1.5" fill="#ff0"/>
<rect x="29" y="5" width="2.5" height="3" fill="#ff0"/><rect x="28" y="0" width="1.5" height="1.5" fill="#ff0"/><path d="M3 13 L6 14 L6 18" stroke="#f0d080" stroke-width="1.2" fill="none"/><path d="M25 14 L27 19" stroke="#f0d080" stroke-width="1.2"/></svg>
<svg class="a" style="left:63px;top:328px" width="32" height="32" viewBox="0 0 32 32"><path d="M14 2 L24 6 L20 16 L11 12Z" fill="#0000c0" stroke="#000" stroke-width="0.6"/>
<circle cx="25" cy="7" r="5" fill="#e00000" stroke="#600" stroke-width="0.6"/><circle cx="23.5" cy="5.5" r="1.5" fill="#ff8080"/>
<path d="M2 14 L26 12 L30 14 L28 30 L6 31Z" fill="#c0c040" stroke="#404000" stroke-width="0.8"/>
<path d="M4 12 L12 10 L14 14 L6 16Z" fill="#00a000" stroke="#004000" stroke-width="0.6"/>
<rect x="10" y="19" width="6" height="3" fill="#fff" stroke="#404000" stroke-width="0.5"/></svg>
<svg class="a" style="left:59px;top:389px" width="32" height="26" viewBox="0 0 32 26"><ellipse cx="13" cy="5" rx="11" ry="3.5" fill="#00ffff" stroke="#000" stroke-width="0.8"/>
<ellipse cx="13" cy="12" rx="11" ry="3.5" fill="#00ffff" stroke="#000" stroke-width="0.8"/>
<ellipse cx="13" cy="19" rx="11" ry="3.5" fill="#00ffff" stroke="#000" stroke-width="0.8"/>
<path d="M22 14 L29 22" stroke="#000" stroke-width="3"/><path d="M22 14 L29 22" stroke="#e08040" stroke-width="1.6"/>
<circle cx="19" cy="10" r="5" fill="#fff" stroke="#000" stroke-width="1"/></svg>
<svg class="a" style="left:55px;top:452px" width="32" height="30" viewBox="0 0 32 30"><rect x="2" y="2" width="30" height="28" fill="#808080"/><rect x="0" y="0" width="30" height="9" fill="#fff"/><rect x="0" y="9" width="30" height="10" fill="#0000ff"/><rect x="0" y="19" width="30" height="9" fill="#ff0000"/></svg>
<svg class="a" style="left:50px;top:514px" width="32" height="32" viewBox="0 0 32 32"><ellipse cx="5" cy="9" rx="2.8" ry="3.8" fill="none" stroke="#e0e000" stroke-width="1.2"/>
<ellipse cx="25" cy="5" rx="2.5" ry="2.5" fill="none" stroke="#c00000" stroke-width="1.2"/>
<ellipse cx="6" cy="23" rx="2.8" ry="3.8" fill="none" stroke="#0000e0" stroke-width="1.2"/>
<path d="M8 6 C12 3 18 3 22 4M3 13 C1 16 2 18 4 19M9 25 C12 27 14 27 16 26" stroke="#000" fill="none" stroke-width="0.9"/><g transform="translate(20,22) rotate(-40) scale(0.75)">
<path d="M-7 -6l-4 -3M-8 0h-5M-7 6l-4 4M7 -6l4 -3M8 0h5M7 6l4 4M-2 -11l-3 -5M2 -11l3 -5" stroke="#000" stroke-width="1.6" fill="none"/>
<ellipse cx="0" cy="2" rx="7.5" ry="9.5" fill="#f0e040" stroke="#000" stroke-width="1.2"/>
<path d="M0 -7V11M-5 0h10" stroke="#a09010" stroke-width="1"/>
<ellipse cx="0" cy="-9" rx="4" ry="3" fill="#f0e040" stroke="#000"/>
<circle cx="2" cy="-10" r="1.2" fill="#c00000"/></g></svg>
<div class="a t dl" style="left:62px;top:81px;">Отладчик</div>
<div class="a t dl" style="left:116px;top:81px;">Иконописец</div>
<div class="a t dl" style="left:191px;top:81px;">Менеджер секций</div>
<div class="a t dl" style="left:296px;top:81px;">Центр разработки</div>
<div class="a t dl" style="left:402px;top:81px;">Дизайнер</div>
<div class="a t dl" style="left:465px;top:81px;">Блокнот</div>
<div class="a t dl" style="left:530px;top:81px;">Счеты</div>
<div class="a t dl" style="left:584px;top:81px;">!Пуск</div>
<div class="a t dl" style="left:634px;top:81px;">Примеры</div>
<div class="a t dl" style="left:697px;top:81px;">Автомат</div>
<div class="a t dl" style="left:752px;top:81px;">Игры</div>
<div class="a t dl" style="left:46px;top:132px;">Сравнение секций</div>
<div class="a t dl" style="left:61px;top:185px;">Терминалы</div>
<div class="a t dl" style="left:62px;top:244px;">Приколы</div>
<div class="a t dl" style="left:34px;top:301px;">Мастер приложений</div>
<div class="a t dl" style="left:28px;top:362px;">Менеджер проектов</div>
<div class="a t dl" style="left:17px;top:421px;">Навигатор баз данных</div>
<div class="a t dl" style="left:59px;top:486px;">Язык</div>
<div class="a t dl" style="left:44px;top:549px;">Отладчик</div>
<div class="a r2" style="left:123px;top:109px;width:870px;height:634px"></div>
<svg class="a" style="left:128px;top:111px" width="16" height="16" viewBox="0 0 16 16"><g transform="scale(0.5)"><rect x="0" y="0" width="32" height="32" fill="#fff"/><path d="M0 31H32M31 0V32" stroke="#a0a0a0" stroke-width="2"/><path d="M0 29.5H30M29.5 0V30" stroke="#e0e0e0" stroke-width="1"/>
<path d="M3 6 L6 3 L13 9 L15 7 L15 14 L8 14 L10 12Z" fill="#e00000" stroke="#000" stroke-width="0.8"/>
<path d="M28 6 L25 3 L18 9 L16 7 L16 14 L23 14 L21 12Z" fill="#00d000" stroke="#000" stroke-width="0.8"/>
<path d="M15.5 15 L21 21 L18 21 L18 28 L13 28 L13 21 L10 21Z" fill="#0000e0" stroke="#000" stroke-width="0.8"/></g></svg>
<div class="a t " style="left:357px;top:114px;font-weight:bold;font-size:12px;letter-spacing:0.1px">Центр управления разработками - (D:\flora\flora\designer.prj)</div>
<div class="a" style="left:938px;top:110px;width:18px;height:18px;background:#c0c0c0;box-shadow:inset -1px -1px #808080,inset 1px 1px #fff"></div>
<svg class="a" style="left:942px;top:116px" width="10" height="6" viewBox="0 0 10 6"><path d="M0 0H10L5 5Z" fill="#000"/></svg>
<div class="a" style="left:956px;top:110px;width:18px;height:18px;background:#c0c0c0;box-shadow:inset -1px -1px #808080,inset 1px 1px #fff"></div>
<svg class="a" style="left:960px;top:116px" width="10" height="6" viewBox="0 0 10 6"><path d="M0 5H10L5 0Z" fill="#000"/></svg>
<div class="a" style="left:974px;top:110px;width:17px;height:18px;background:#c0c0c0;box-shadow:inset -1px -1px #808080,inset 1px 1px #fff"></div>
<svg class="a" style="left:978px;top:114px" width="10" height="10" viewBox="0 0 10 10"><path d="M1 1L9 9M9 1L1 9" stroke="#000" stroke-width="2"/></svg>
<div class="a" style="left:125px;top:128px;width:865px;height:2px;box-shadow:inset 0 1px #808080,inset 0 -1px #fff"></div>
<div class="a t " style="left:133px;top:129px;font-size:11px">Файл</div>
<div class="a" style="left:125px;top:144px;width:865px;height:2px;box-shadow:inset 0 1px #808080,inset 0 -1px #fff"></div>
<div class="a" style="left:126px;top:146px;width:864px;height:30px;box-shadow:inset 1px 0 #fff,inset -1px -1px #808080"></div>
<div class="a" style="left:129px;top:149px;width:3px;height:24px;box-shadow:inset 1px 1px #fff,inset -1px -1px #808080"></div>
<svg class="a" style="left:137px;top:149px" width="18" height="20" viewBox="0 0 18 20"><path d="M2 1H11L16 6V18H2Z" fill="#fff" stroke="#000080" stroke-width="2"/><path d="M11 1V6H16" fill="#000080" stroke="#000080" stroke-width="1.5"/><path d="M3 19H17V7" stroke="#808080" fill="none"/></svg>
<div class="a" style="left:126px;top:176px;width:864px;height:546px;box-shadow:inset 1px 1px #fff,inset -1px -1px #808080"></div>
<div class="a" style="left:129px;top:179px;width:858px;height:3px;box-shadow:inset 0 1px #fff,inset 0 -1px #808080"></div>
<div class="a" style="left:133px;top:185px;width:60px;height:19px;border-top:1px solid #fff;border-left:1px solid #fff;border-right:1px solid #808080;border-top-left-radius:2px"></div>
<div class="a" style="left:129px;top:203px;width:4px;height:1px;background:#fff"></div>
<div class="a t " style="left:140px;top:187px;font-size:11px">Проекты</div>
<div class="a" style="left:126px;top:203px;width:364px;height:517px;box-shadow:inset -1px -1px #808080"></div>
<div class="a" style="left:128px;top:205px;width:361px;height:514px;background:#fff;box-shadow:inset 1px 1px #808080,inset 2px 2px #000,inset -1px -1px #fff,inset -2px -2px #dfdfdf"></div>
<div class="a" style="left:494px;top:205px;width:496px;height:516px;box-shadow:inset 1px 1px #fff,inset -1px -1px #808080"></div>
<div class="a" style="left:472px;top:207px;width:15px;height:511px;border:1px solid #000;background:repeating-conic-gradient(#808080 0 25%,#dcdcdc 0 100%) 0 0/2px 2px"></div>
<div class="a" style="left:472px;top:703px;width:15px;height:15px;background:#c0c0c0;border:1px solid #000;box-shadow:inset 1px 1px #fff,inset -1px -1px #808080"></div>
<svg class="a" style="left:474px;top:706px" width="11" height="9" viewBox="0 0 11 9"><path d="M4 0.5H7V4H9.5L5.5 8L1.5 4H4Z" fill="#808080" stroke="#000" stroke-width="1.2"/></svg>
<div class="a" style="left:127px;top:722px;width:863px;height:18px;box-shadow:inset 1px 1px #808080,inset -1px -1px #fff"></div>
<div class="a" style="left:130px;top:725px;width:2px;height:12px;box-shadow:inset 1px 1px #fff,inset -1px -1px #808080"></div>
<div class="a t " style="left:134px;top:724px;font-size:11px">D:\flora\flora\designer.prj &lt;TemplatesTree&gt; (1 связей, 0 контактов)</div>
<div class="a" style="left:193px;top:203px;width:794px;height:1px;background:#fff"></div>
<div class="a" style="left:986px;top:203px;width:1px;height:1px;background:#000"></div>
<div class="a" style="left:923px;top:206px;width:64px;height:146px;background:#000"></div>
<div class="a" style="left:923px;top:208px;width:63px;height:15px;background:#c0c0c0"></div>
<div class="a" style="left:923px;top:224px;width:63px;height:15px;background:#c0c0c0"></div>
<div class="a" style="left:923px;top:240px;width:63px;height:15px;background:#000080"></div>
<div class="a" style="left:923px;top:256px;width:63px;height:15px;background:#fff"></div>
<div class="a" style="left:923px;top:272px;width:63px;height:15px;background:#fff"></div>
<div class="a" style="left:923px;top:288px;width:63px;height:15px;background:#fff"></div>
<div class="a" style="left:923px;top:304px;width:63px;height:15px;background:#fff"></div>
<div class="a" style="left:923px;top:320px;width:63px;height:15px;background:#fff"></div>
<div class="a" style="left:923px;top:336px;width:63px;height:15px;background:#fff"></div>
<div class="a" style="left:987px;top:206px;width:1px;height:147px;background:#fff"></div>
<div class="a" style="left:923px;top:352px;width:65px;height:1px;background:#fff"></div>
<div class="a" style="left:972px;top:256px;width:14px;height:15px;background:#c0c0c0;box-shadow:inset 1px 1px #fff,inset -1px -1px #808080"></div>
<div class="a" style="left:975px;top:264px;width:9px;height:2px;background:repeating-linear-gradient(90deg,#000 0 2px,transparent 2px 3px)"></div>
<div class="a" style="left:972px;top:272px;width:14px;height:15px;background:#c0c0c0;box-shadow:inset 1px 1px #fff,inset -1px -1px #808080"></div>
<svg class="a" style="left:974px;top:275px" width="10" height="10" viewBox="0 0 10 10"><path d="M3.5 0H6.5V3H8.5L5 6.5L1.5 3H3.5Z" fill="#000"/><rect x="1" y="8" width="8" height="1.3" fill="#000"/></svg>
<div class="a" style="left:972px;top:336px;width:14px;height:8px;background:#c0c0c0;box-shadow:inset 1px 1px #fff,inset -1px -1px #808080"></div>
<div class="a" style="left:972px;top:343px;width:14px;height:8px;background:#c0c0c0;box-shadow:inset 1px 1px #fff,inset -1px -1px #808080"></div>
<svg class="a" style="left:975px;top:338px" width="8" height="4" viewBox="0 0 8 4"><path d="M0 4H8L4 0Z" fill="#000"/></svg>
<svg class="a" style="left:975px;top:345px" width="8" height="4" viewBox="0 0 8 4"><path d="M0 0H8L4 4Z" fill="#000"/></svg>
<div class="a" style="left:138px;top:222px;width:1px;height:493px;background:repeating-linear-gradient(#808080 0 1px,transparent 1px 2px)"></div>
<div class="a" style="left:133px;top:211px;width:11px;height:11px;border:1px solid #000;background:#c0c0c0;box-shadow:inset 1px 1px #808080,inset -1px -1px #fff"></div>
<div class="a" style="left:136px;top:216px;width:5px;height:1px;background:#000"></div>
<div class="a" style="left:149px;top:230px;width:11px;height:11px;border:1px solid #000;background:#c0c0c0;box-shadow:inset 1px 1px #fff,inset -1px -1px #808080"></div>
<div class="a" style="left:152px;top:235px;width:5px;height:1px;background:#000"></div>
<div class="a" style="left:154px;top:233px;width:1px;height:5px;background:#000"></div>
<div class="a" style="left:149px;top:248px;width:11px;height:11px;border:1px solid #000;background:#c0c0c0;box-shadow:inset 1px 1px #808080,inset -1px -1px #fff"></div>
<div class="a" style="left:152px;top:253px;width:5px;height:1px;background:#000"></div>
<div class="a" style="left:149px;top:302px;width:11px;height:11px;border:1px solid #000;background:#c0c0c0;box-shadow:inset 1px 1px #808080,inset -1px -1px #fff"></div>
<div class="a" style="left:152px;top:307px;width:5px;height:1px;background:#000"></div>
<div class="a" style="left:149px;top:482px;width:11px;height:11px;border:1px solid #000;background:#c0c0c0;box-shadow:inset 1px 1px #808080,inset -1px -1px #fff"></div>
<div class="a" style="left:152px;top:487px;width:5px;height:1px;background:#000"></div>
<div class="a" style="left:149px;top:536px;width:11px;height:11px;border:1px solid #000;background:#c0c0c0;box-shadow:inset 1px 1px #fff,inset -1px -1px #808080"></div>
<div class="a" style="left:152px;top:541px;width:5px;height:1px;background:#000"></div>
<div class="a" style="left:154px;top:539px;width:1px;height:5px;background:#000"></div>
<div class="a" style="left:149px;top:554px;width:11px;height:11px;border:1px solid #000;background:#c0c0c0;box-shadow:inset 1px 1px #fff,inset -1px -1px #808080"></div>
<div class="a" style="left:152px;top:559px;width:5px;height:1px;background:#000"></div>
<div class="a" style="left:154px;top:557px;width:1px;height:5px;background:#000"></div>
<div class="a" style="left:149px;top:572px;width:11px;height:11px;border:1px solid #000;background:#c0c0c0;box-shadow:inset 1px 1px #fff,inset -1px -1px #808080"></div>
<div class="a" style="left:152px;top:577px;width:5px;height:1px;background:#000"></div>
<div class="a" style="left:154px;top:575px;width:1px;height:5px;background:#000"></div>
<div class="a" style="left:149px;top:626px;width:11px;height:11px;border:1px solid #000;background:#c0c0c0;box-shadow:inset 1px 1px #fff,inset -1px -1px #808080"></div>
<div class="a" style="left:152px;top:631px;width:5px;height:1px;background:#000"></div>
<div class="a" style="left:154px;top:629px;width:1px;height:5px;background:#000"></div>
<div class="a" style="left:149px;top:644px;width:11px;height:11px;border:1px solid #000;background:#c0c0c0;box-shadow:inset 1px 1px #fff,inset -1px -1px #808080"></div>
<div class="a" style="left:152px;top:649px;width:5px;height:1px;background:#000"></div>
<div class="a" style="left:154px;top:647px;width:1px;height:5px;background:#000"></div>
<div class="a" style="left:144px;top:216px;width:4px;height:1px;background:repeating-linear-gradient(90deg,#808080 0 1px,transparent 1px 2px)"></div>
<svg class="a" style="left:148px;top:206px" width="22" height="22" viewBox="0 0 22 22"><path d="M6 9 L16 3 L20 10 L10 16Z" fill="#6060d0" stroke="#000040" stroke-width="0.7"/><path d="M12 6 L19 2 L21 8 L15 11Z" fill="#8080f0" stroke="#000040" stroke-width="0.6"/>
<ellipse cx="5" cy="15" rx="4.5" ry="3.5" fill="#6060d0" stroke="#000040" stroke-width="0.7"/><ellipse cx="10" cy="17" rx="4.5" ry="3.5" fill="#8080e0" stroke="#000040" stroke-width="0.7"/><ellipse cx="10" cy="17" rx="2.5" ry="2" fill="#c0c0ff"/></svg>
<div class="a" style="left:149px;top:662px;width:11px;height:11px;border:1px solid #000;background:#c0c0c0;box-shadow:inset 1px 1px #fff,inset -1px -1px #808080"></div>
<div class="a" style="left:152px;top:667px;width:5px;height:1px;background:#000"></div>
<div class="a" style="left:154px;top:665px;width:1px;height:5px;background:#000"></div>
<div class="a" style="left:160px;top:667px;width:6px;height:1px;background:repeating-linear-gradient(90deg,#808080 0 1px,transparent 1px 2px)"></div>
<svg class="a" style="left:167px;top:657px" width="22" height="22" viewBox="0 0 22 22"><path d="M6 9 L16 3 L20 10 L10 16Z" fill="#6060d0" stroke="#000040" stroke-width="0.7"/><path d="M12 6 L19 2 L21 8 L15 11Z" fill="#8080f0" stroke="#000040" stroke-width="0.6"/>
<ellipse cx="5" cy="15" rx="4.5" ry="3.5" fill="#6060d0" stroke="#000040" stroke-width="0.7"/><ellipse cx="10" cy="17" rx="4.5" ry="3.5" fill="#8080e0" stroke="#000040" stroke-width="0.7"/><ellipse cx="10" cy="17" rx="2.5" ry="2" fill="#c0c0ff"/></svg>
<div class="a t " style="left:196px;top:661px;font-size:11px;letter-spacing:-0.1px">StateMachine</div>
<div class="a" style="left:154px;top:672px;width:1px;height:13px;background:repeating-linear-gradient(#808080 0 1px,transparent 1px 2px)"></div>
<div class="a" style="left:154px;top:685px;width:10px;height:1px;background:repeating-linear-gradient(90deg,#808080 0 1px,transparent 1px 2px)"></div>
<div class="a" style="left:133px;top:699px;width:11px;height:11px;border:1px solid #000;background:#c0c0c0;box-shadow:inset 1px 1px #808080,inset -1px -1px #fff"></div>
<div class="a" style="left:136px;top:704px;width:5px;height:1px;background:#000"></div>
<div class="a" style="left:144px;top:704px;width:5px;height:1px;background:repeating-linear-gradient(90deg,#808080 0 1px,transparent 1px 2px)"></div>
<svg class="a" style="left:151px;top:695px" width="22" height="22" viewBox="0 0 22 22"><path d="M6 9 L16 3 L20 10 L10 16Z" fill="#6060d0" stroke="#000040" stroke-width="0.7"/><path d="M12 6 L19 2 L21 8 L15 11Z" fill="#8080f0" stroke="#000040" stroke-width="0.6"/>
<ellipse cx="5" cy="15" rx="4.5" ry="3.5" fill="#6060d0" stroke="#000040" stroke-width="0.7"/><ellipse cx="10" cy="17" rx="4.5" ry="3.5" fill="#8080e0" stroke="#000040" stroke-width="0.7"/><ellipse cx="10" cy="17" rx="2.5" ry="2" fill="#c0c0ff"/></svg>
<div class="a t " style="left:179px;top:699px;font-size:12px;font-weight:bold">2) designfb.prj</div>
<svg class="a" style="left:172px;top:714px" width="10" height="4" viewBox="0 0 10 4"><path d="M0 4 L5 0 L10 4Z" fill="#6060d0"/></svg>
<div class="a r2" style="left:155px;top:127px;width:769px;height:531px"></div>
<svg class="a" style="left:160px;top:129px" width="16" height="16" viewBox="0 0 16 16"><g transform="scale(0.5)"><g transform="scale(1)">
<path d="M5 6 L29 31" stroke="#000" stroke-width="4"/><path d="M5 6 L29 31" stroke="#c08020" stroke-width="2.4"/>
<path d="M1 11 L10 2 L15 6 L6 15Z" fill="#202020" stroke="#000" stroke-width="0.8"/><path d="M5 9 L9 5" stroke="#808080" stroke-width="0.8"/>
<path d="M6 27 L23 11" stroke="#000" stroke-width="5"/><path d="M6 27 L23 11" stroke="#f0f0f0" stroke-width="3"/>
<path d="M19 9 C19 4 25 2 29 4 L25 8 L27 11 L31 8 C32 13 28 16 23 15Z" fill="#f0f0f0" stroke="#000" stroke-width="1"/>
<path d="M11 28 C11 32 5 34 2 31 L6 28 L4 25 L1 27 C0 22 4 19 9 21Z" fill="#f0f0f0" stroke="#000" stroke-width="1"/>
<path d="M21 19 L29 12" stroke="#000" stroke-width="2.6"/><path d="M21 19 L29 12" stroke="#c0c0c0" stroke-width="1.2"/>
<path d="M12 27 L21 19" stroke="#000" stroke-width="6"/><path d="M12 27 L21 19" stroke="#ff1010" stroke-width="4"/></g></g></svg>
<div class="a" style="left:176px;top:130px;width:224px;height:15px;background:repeating-linear-gradient(#000080 0 1px,#c0c0c0 1px 2px)"></div>
<div class="a" style="left:642px;top:130px;width:227px;height:15px;background:repeating-linear-gradient(#000080 0 1px,#c0c0c0 1px 2px)"></div>
<div class="a t " style="left:403px;top:131px;font-weight:bold;font-size:12px;letter-spacing:-0.16px">Дизайнер - redit.ots&nbsp; [Lib RGraph Figures]</div>
<div class="a" style="left:869px;top:129px;width:18px;height:18px;background:#c0c0c0;box-shadow:inset -1px -1px #808080,inset 1px 1px #fff"></div>
<svg class="a" style="left:873px;top:135px" width="10" height="6" viewBox="0 0 10 6"><path d="M0 0H10L5 5Z" fill="#000"/></svg>
<div class="a" style="left:887px;top:129px;width:18px;height:18px;background:#c0c0c0;box-shadow:inset -1px -1px #808080,inset 1px 1px #fff"></div>
<svg class="a" style="left:891px;top:135px" width="10" height="6" viewBox="0 0 10 6"><path d="M0 5H10L5 0Z" fill="#000"/></svg>
<div class="a" style="left:905px;top:129px;width:17px;height:18px;background:#c0c0c0;box-shadow:inset -1px -1px #808080,inset 1px 1px #fff"></div>
<svg class="a" style="left:909px;top:133px" width="10" height="10" viewBox="0 0 10 10"><path d="M1 1L9 9M9 1L1 9" stroke="#000" stroke-width="2"/></svg>
<div class="a" style="left:157px;top:146px;width:765px;height:2px;box-shadow:inset 0 1px #808080,inset 0 -1px #fff"></div>
<div class="a t " style="left:166px;top:147px;font-size:11px"><u>Ф</u>айл</div>
<div class="a t " style="left:210px;top:147px;font-size:11px"><u>П</u>равка</div>
<div class="a t " style="left:267px;top:147px;font-size:11px"><u>О</u>бъект</div>
<div class="a t " style="left:324px;top:147px;font-size:11px"><u>Н</u>астройка</div>
<div class="a t " style="left:395px;top:147px;font-size:11px"><u>И</u>збранное</div>
<div class="a t " style="left:467px;top:147px;font-size:11px">Средс<u>т</u>ва</div>
<div class="a t " style="left:531px;top:147px;font-size:11px"><u>С</u>траница</div>
<div class="a" style="left:157px;top:162px;width:765px;height:2px;box-shadow:inset 0 1px #808080,inset 0 -1px #fff"></div>
<div class="a" style="left:157px;top:190px;width:765px;height:2px;box-shadow:inset 0 1px #808080,inset 0 -1px #fff"></div>
<div class="a" style="left:323px;top:166px;width:2px;height:22px;box-shadow:inset 1px 0 #808080,inset -1px 0 #fff"></div>
<div class="a" style="left:354px;top:166px;width:2px;height:22px;box-shadow:inset 1px 0 #808080,inset -1px 0 #fff"></div>
<div class="a" style="left:431px;top:166px;width:2px;height:22px;box-shadow:inset 1px 0 #808080,inset -1px 0 #fff"></div>
<div class="a" style="left:159px;top:194px;width:147px;height:16px;box-shadow:inset 1px 1px #808080,inset -1px -1px #fff"></div>
<div class="a t " style="left:161px;top:196px;font-size:11px">Путь:</div>
<div class="a" style="left:307px;top:194px;width:614px;height:16px;box-shadow:inset 1px 1px #808080,inset -1px -1px #fff"></div>
<div class="a t " style="left:311px;top:196px;font-size:11px;letter-spacing:-0.2px">Обьекты:</div>
<div class="a" style="left:158px;top:211px;width:148px;height:428px;background:#c0c0c0;box-shadow:inset 1px 1px #808080,inset 2px 2px #000,inset -1px -1px #fff,inset -2px -2px #dfdfdf"></div>
<div class="a" style="left:307px;top:211px;width:614px;height:428px;background:#c0c0c0;box-shadow:inset 1px 1px #808080,inset 2px 2px #000,inset -1px -1px #fff,inset -2px -2px #dfdfdf"></div>
<div class="a" style="left:160px;top:624px;width:145px;height:13px;background:#c0c0c0"></div>
<div class="a" style="left:159px;top:623px;width:147px;height:1px;background:#000"></div>
<div class="a" style="left:160px;top:624px;width:14px;height:14px;background:#c0c0c0;box-shadow:inset 1px 1px #fff,inset -1px -1px #000"></div>
<svg class="a" style="left:162px;top:626px" width="10" height="10" viewBox="0 0 10 10"><path d="M0.5 5L5 0.5V3.5H9V6.5H5V9.5Z" fill="#808080" stroke="#000" stroke-width="1"/></svg>
<div class="a" style="left:290px;top:624px;width:15px;height:14px;background:#c0c0c0;box-shadow:inset 1px 1px #fff,inset -1px -1px #000"></div>
<svg class="a" style="left:292px;top:626px" width="10" height="10" viewBox="0 0 10 10"><path d="M9.5 5L5 0.5V3.5H1V6.5H5V9.5Z" fill="#808080" stroke="#000" stroke-width="1"/></svg>
<div class="a" style="left:174px;top:624px;width:116px;height:14px;box-shadow:inset 1px 1px #fff,inset -1px -1px #000"></div>
<div class="a" style="left:229px;top:627px;width:1px;height:6px;background:#fff;box-shadow:1px 0 #808080"></div>
<div class="a" style="left:159px;top:637px;width:147px;height:1px;background:#000"></div>
<div class="a" style="left:158px;top:639px;width:76px;height:16px;box-shadow:inset 1px 1px #808080,inset -1px -1px #fff"></div>
<svg class="a" style="left:159px;top:640px" width="74" height="14" viewBox="0 0 74 14"><g stroke-width="1" fill="#c0c0c0">
<path d="M2 0.5 L6 12.5 L14 12.5 L15 0.5" stroke="#808080"/><path d="M2 0.5 L6 12.5" stroke="#fff"/>
<path d="M30 0.5 L29 12.5 L16 12.5 L15 0.5" stroke="#808080"/><path d="M15 0.5 L19 12.5" stroke="#fff"/>
<path d="M30 0.5 L34 12.5 L43 12.5 L44 0.5" stroke="#808080"/><path d="M30 0.5 L34 12.5" stroke="#fff"/>
<path d="M44 0.5 L48 12.5 L57 12.5 L58 0.5" stroke="#808080"/><path d="M44 0.5 L48 12.5" stroke="#fff"/>
<path d="M58 0.5 L62 12.5 L71 12.5 L72 0.5" stroke="#808080"/><path d="M58 0.5 L62 12.5" stroke="#fff"/></g></svg>
<div class="a t " style="left:167px;top:641px;font-size:11px">1</div>
<div class="a t " style="left:180px;top:641px;font-size:11px;font-weight:bold">2</div>
<div class="a t " style="left:194px;top:641px;font-size:11px">3</div>
<div class="a t " style="left:208px;top:641px;font-size:11px">4</div>
<div class="a t " style="left:222px;top:641px;font-size:11px">5</div>
<div class="a" style="left:235px;top:640px;width:15px;height:15px;box-shadow:inset 1px 1px #808080,inset -1px -1px #fff"></div>
<div class="a" style="left:252px;top:640px;width:669px;height:15px;box-shadow:inset 1px 1px #808080,inset -1px -1px #fff"></div>
<div class="a t " style="left:255px;top:641px;font-size:11px">pointer&nbsp;&nbsp; : ф</div>
<div class="a" style="left:162px;top:217px;width:11px;height:11px;border:1px solid #000;background:#c0c0c0;box-shadow:inset 1px 1px #808080,inset -1px -1px #fff"></div>
<div class="a" style="left:165px;top:222px;width:5px;height:1px;background:#000"></div>
<div class="a" style="left:174px;top:222px;width:3px;height:1px;background:repeating-linear-gradient(90deg,#000 0 1px,transparent 1px 2px)"></div>
<div class="a t " style="left:182px;top:217px;color:#000;width:122px;overflow:hidden;letter-spacing:-0.35px">Root</div>
<div class="a" style="left:176px;top:235px;width:11px;height:11px;border:1px solid #000;background:#c0c0c0;box-shadow:inset 1px 1px #808080,inset -1px -1px #fff"></div>
<div class="a" style="left:179px;top:240px;width:5px;height:1px;background:#000"></div>
<div class="a" style="left:188px;top:240px;width:3px;height:1px;background:repeating-linear-gradient(90deg,#000 0 1px,transparent 1px 2px)"></div>
<div class="a" style="left:181px;top:232px;width:1px;height:3px;background:repeating-linear-gradient(#000 0 1px,transparent 1px 2px)"></div>
<div class="a t " style="left:196px;top:235px;color:#000;width:108px;overflow:hidden;letter-spacing:-0.35px">Lib RGraph Figures</div>
<div class="a" style="left:190px;top:253px;width:11px;height:11px;border:1px solid #000;background:#c0c0c0;box-shadow:inset 1px 1px #808080,inset -1px -1px #fff"></div>
<div class="a" style="left:193px;top:258px;width:5px;height:1px;background:#000"></div>
<div class="a" style="left:202px;top:258px;width:3px;height:1px;background:repeating-linear-gradient(90deg,#000 0 1px,transparent 1px 2px)"></div>
<div class="a" style="left:195px;top:250px;width:1px;height:3px;background:repeating-linear-gradient(#000 0 1px,transparent 1px 2px)"></div>
<div class="a t " style="left:210px;top:253px;color:#000080;width:94px;overflow:hidden;letter-spacing:-0.35px">TRFigArc</div>
<div class="a" style="left:204px;top:271px;width:11px;height:11px;border:1px solid #000;background:#c0c0c0;box-shadow:inset 1px 1px #fff,inset -1px -1px #808080"></div>
<div class="a" style="left:207px;top:276px;width:5px;height:1px;background:#000"></div>
<div class="a" style="left:209px;top:274px;width:1px;height:5px;background:#000"></div>
<div class="a" style="left:216px;top:276px;width:3px;height:1px;background:repeating-linear-gradient(90deg,#000 0 1px,transparent 1px 2px)"></div>
<div class="a" style="left:209px;top:268px;width:1px;height:3px;background:repeating-linear-gradient(#000 0 1px,transparent 1px 2px)"></div>
<div class="a t " style="left:224px;top:271px;color:#000;width:80px;overflow:hidden;letter-spacing:-0.5px">INTERNAL_DATA</div>
<div class="a" style="left:316px;top:221px;width:1px;height:176px;background:repeating-linear-gradient(#000 0 1px,transparent 1px 2px)"></div>
<div class="a" style="left:491px;top:213px;width:1px;height:424px;background:repeating-linear-gradient(#808080 0 1px,transparent 1px 2px)"></div>
<div class="a" style="left:356px;top:393px;width:564px;height:18px;background:#000080"></div>
<div class="a" style="left:317px;top:221px;width:8px;height:1px;background:repeating-linear-gradient(90deg,#000 0 1px,transparent 1px 2px)"></div>
<svg class="a" style="left:328px;top:213px" width="22" height="18" viewBox="0 0 22 18"><path d="M5 1 C2 1 3 6 1 7 C3 8 2 12 5 13" stroke="#000" fill="none" stroke-width="0.9"/><path d="M17 6 C20 6 19 11 21 12 C19 13 20 17 17 17" stroke="#000" fill="none" stroke-width="0.9"/><path d="M5 6 L12 2 L19 9 L12 13Z" fill="#b0e0a0" stroke="#206020" stroke-width="0.8"/><path d="M7 9 L12 13 L19 9 L19 11 L12 15 L6 11Z" fill="#60a060" stroke="#206020" stroke-width="0.6"/><ellipse cx="12" cy="7.5" rx="2.5" ry="1.6" fill="#f0e000" stroke="#806000" stroke-width="0.5"/></svg>
<div class="a t " style="left:357px;top:216px;color:#000;letter-spacing:-0.35px">Dir</div>
<div class="a t " style="left:494px;top:216px;color:#000;letter-spacing:-0.5px">INTERNAL_DATA</div>
<div class="a" style="left:311px;top:234px;width:11px;height:11px;border:1px solid #000;background:#c0c0c0;box-shadow:inset 1px 1px #fff,inset -1px -1px #808080"></div>
<div class="a" style="left:314px;top:239px;width:5px;height:1px;background:#000"></div>
<div class="a" style="left:316px;top:237px;width:1px;height:5px;background:#000"></div>
<div class="a" style="left:323px;top:239px;width:3px;height:1px;background:repeating-linear-gradient(90deg,#000 0 1px,transparent 1px 2px)"></div>
<svg class="a" style="left:330px;top:234px" width="17" height="13" viewBox="0 0 17 13"><ellipse cx="6.5" cy="4" rx="5" ry="3.2" fill="#0050e0" stroke="#002060" stroke-width="0.6" transform="rotate(15 6.5 4)"/><path d="M0.5 6 L8 9 L1.5 12.5Z" fill="#00a050" stroke="#004020" stroke-width="0.6"/><path d="M8 9 L16 6 L14.5 12.5Z" fill="#e03030" stroke="#601010" stroke-width="0.6"/></svg>
<div class="a t " style="left:357px;top:234px;color:#000;letter-spacing:-0.35px">FigSrcEdit</div>
<div class="a t " style="left:494px;top:234px;color:#000;letter-spacing:-0.1px">edP</div>
<div class="a" style="left:311px;top:252px;width:11px;height:11px;border:1px solid #000;background:#c0c0c0;box-shadow:inset 1px 1px #808080,inset -1px -1px #fff"></div>
<div class="a" style="left:314px;top:257px;width:5px;height:1px;background:#000"></div>
<div class="a" style="left:323px;top:257px;width:3px;height:1px;background:repeating-linear-gradient(90deg,#000 0 1px,transparent 1px 2px)"></div>
<svg class="a" style="left:330px;top:252px" width="17" height="13" viewBox="0 0 17 13"><ellipse cx="6.5" cy="4" rx="5" ry="3.2" fill="#0050e0" stroke="#002060" stroke-width="0.6" transform="rotate(15 6.5 4)"/><path d="M0.5 6 L8 9 L1.5 12.5Z" fill="#00a050" stroke="#004020" stroke-width="0.6"/><path d="M8 9 L16 6 L14.5 12.5Z" fill="#e03030" stroke="#601010" stroke-width="0.6"/></svg>
<div class="a t " style="left:357px;top:252px;color:#000;letter-spacing:-0.35px">FigSrcEdit</div>
<div class="a t " style="left:494px;top:252px;color:#000;letter-spacing:-0.1px">edZ</div>
<div class="a" style="left:331px;top:275px;width:8px;height:1px;background:repeating-linear-gradient(90deg,#000 0 1px,transparent 1px 2px)"></div>
<svg class="a" style="left:342px;top:265px" width="21" height="20" viewBox="0 0 21 20"><rect x="0.5" y="9.5" width="12" height="9" fill="#fff" stroke="#000"/><path d="M2 12h1M4 12h1M6 12h1M8 12h1M10 12h1M2 14h1M4 14h1M6 14h1M8 14h1M10 14h1M2 16h9" stroke="#000"/><path d="M1 1 C6 1 10 4 12 8" stroke="#000" stroke-width="0.9" fill="none"/><path d="M10 8 C12 5 16 5 19 7 C16 9 12 9 10 8Z" fill="#40b020" stroke="#104000" stroke-width="0.5"/><circle cx="14.5" cy="13" r="5" fill="#f0a000" stroke="#604000" stroke-width="0.6"/><circle cx="13" cy="11.5" r="1.6" fill="#ffe080"/></svg>
<div class="a t " style="left:372px;top:270px;color:#000;letter-spacing:-0.3px">ReflexTask :</div>
<div class="a t " style="left:494px;top:270px;color:#000;letter-spacing:-0.1px">key &amp; edit &amp; cur &amp; adjust</div>
<div class="a" style="left:331px;top:293px;width:8px;height:1px;background:repeating-linear-gradient(90deg,#000 0 1px,transparent 1px 2px)"></div>
<svg class="a" style="left:342px;top:283px" width="21" height="20" viewBox="0 0 21 20"><rect x="0.5" y="9.5" width="12" height="9" fill="#fff" stroke="#000"/><path d="M2 12h1M4 12h1M6 12h1M8 12h1M10 12h1M2 14h1M4 14h1M6 14h1M8 14h1M10 14h1M2 16h9" stroke="#000"/><path d="M1 1 C6 1 10 4 12 8" stroke="#000" stroke-width="0.9" fill="none"/><path d="M10 8 C12 5 16 5 19 7 C16 9 12 9 10 8Z" fill="#40b020" stroke="#104000" stroke-width="0.5"/><circle cx="14.5" cy="13" r="5" fill="#f0a000" stroke="#604000" stroke-width="0.6"/><circle cx="13" cy="11.5" r="1.6" fill="#ffe080"/></svg>
<div class="a t " style="left:372px;top:288px;color:#000;letter-spacing:-0.3px">ReflexTask :</div>
<div class="a t " style="left:494px;top:288px;color:#000;letter-spacing:-0.1px">tag clicked</div>
<div class="a" style="left:311px;top:306px;width:11px;height:11px;border:1px solid #000;background:#c0c0c0;box-shadow:inset 1px 1px #808080,inset -1px -1px #fff"></div>
<div class="a" style="left:314px;top:311px;width:5px;height:1px;background:#000"></div>
<div class="a" style="left:323px;top:311px;width:3px;height:1px;background:repeating-linear-gradient(90deg,#000 0 1px,transparent 1px 2px)"></div>
<svg class="a" style="left:330px;top:306px" width="17" height="13" viewBox="0 0 17 13"><ellipse cx="6.5" cy="4" rx="5" ry="3.2" fill="#0050e0" stroke="#002060" stroke-width="0.6" transform="rotate(15 6.5 4)"/><path d="M0.5 6 L8 9 L1.5 12.5Z" fill="#00a050" stroke="#004020" stroke-width="0.6"/><path d="M8 9 L16 6 L14.5 12.5Z" fill="#e03030" stroke="#601010" stroke-width="0.6"/></svg>
<div class="a t " style="left:357px;top:306px;color:#000;letter-spacing:-0.35px">FigLine</div>
<div class="a t " style="left:494px;top:306px;color:#000;letter-spacing:-0.1px">line</div>
<div class="a" style="left:331px;top:329px;width:8px;height:1px;background:repeating-linear-gradient(90deg,#000 0 1px,transparent 1px 2px)"></div>
<svg class="a" style="left:342px;top:319px" width="21" height="20" viewBox="0 0 21 20"><path d="M1 1 C6 1 10 4 12 8" stroke="#000" stroke-width="0.9" fill="none"/><path d="M10 8 C12 5 16 5 19 7 C16 9 12 9 10 8Z" fill="#40b020" stroke="#104000" stroke-width="0.5"/><circle cx="14.5" cy="13" r="5" fill="#f0a000" stroke="#604000" stroke-width="0.6"/><circle cx="13" cy="11.5" r="1.6" fill="#ffe080"/></svg>
<div class="a t " style="left:372px;top:324px;color:#000080;letter-spacing:-0.3px">ReflexHint :</div>
<div class="a t " style="left:494px;top:324px;color:#000080;letter-spacing:-0.1px">cursor</div>
<div class="a" style="left:331px;top:347px;width:8px;height:1px;background:repeating-linear-gradient(90deg,#000 0 1px,transparent 1px 2px)"></div>
<svg class="a" style="left:342px;top:337px" width="21" height="20" viewBox="0 0 21 20"><rect x="0.5" y="9.5" width="12" height="9" fill="#fff" stroke="#000"/><path d="M2 12h1M4 12h1M6 12h1M8 12h1M10 12h1M2 14h1M4 14h1M6 14h1M8 14h1M10 14h1M2 16h9" stroke="#000"/><path d="M1 1 C6 1 10 4 12 8" stroke="#000" stroke-width="0.9" fill="none"/><path d="M10 8 C12 5 16 5 19 7 C16 9 12 9 10 8Z" fill="#40b020" stroke="#104000" stroke-width="0.5"/><circle cx="14.5" cy="13" r="5" fill="#f0a000" stroke="#604000" stroke-width="0.6"/><circle cx="13" cy="11.5" r="1.6" fill="#ffe080"/></svg>
<div class="a t " style="left:372px;top:342px;color:#000;letter-spacing:-0.3px">ReflexTask :</div>
<div class="a t " style="left:494px;top:342px;color:#000;letter-spacing:-0.1px">drag</div>
<div class="a" style="left:331px;top:365px;width:8px;height:1px;background:repeating-linear-gradient(90deg,#000 0 1px,transparent 1px 2px)"></div>
<svg class="a" style="left:342px;top:355px" width="21" height="20" viewBox="0 0 21 20"><rect x="0.5" y="9.5" width="12" height="9" fill="#fff" stroke="#000"/><path d="M2 12h1M4 12h1M6 12h1M8 12h1M10 12h1M2 14h1M4 14h1M6 14h1M8 14h1M10 14h1M2 16h9" stroke="#000"/><path d="M1 1 C6 1 10 4 12 8" stroke="#000" stroke-width="0.9" fill="none"/><path d="M10 8 C12 5 16 5 19 7 C16 9 12 9 10 8Z" fill="#40b020" stroke="#104000" stroke-width="0.5"/><circle cx="14.5" cy="13" r="5" fill="#f0a000" stroke="#604000" stroke-width="0.6"/><circle cx="13" cy="11.5" r="1.6" fill="#ffe080"/></svg>
<div class="a t " style="left:372px;top:360px;color:#000;letter-spacing:-0.3px">ReflexTask :</div>
<div class="a t " style="left:494px;top:360px;color:#000;letter-spacing:-0.1px">menu</div>
<div class="a" style="left:317px;top:383px;width:8px;height:1px;background:repeating-linear-gradient(90deg,#000 0 1px,transparent 1px 2px)"></div>
<svg class="a" style="left:330px;top:378px" width="17" height="13" viewBox="0 0 17 13"><ellipse cx="6.5" cy="4" rx="5" ry="3.2" fill="#0050e0" stroke="#002060" stroke-width="0.6" transform="rotate(15 6.5 4)"/><path d="M0.5 6 L8 9 L1.5 12.5Z" fill="#00a050" stroke="#004020" stroke-width="0.6"/><path d="M8 9 L16 6 L14.5 12.5Z" fill="#e03030" stroke="#601010" stroke-width="0.6"/></svg>
<div class="a t " style="left:357px;top:378px;color:#000;letter-spacing:-0.35px">FigLine</div>
<div class="a t " style="left:494px;top:378px;color:#000;letter-spacing:-0.1px">lineV</div>
<div class="a" style="left:311px;top:396px;width:11px;height:11px;border:1px solid #000;background:#c0c0c0;box-shadow:inset 1px 1px #808080,inset -1px -1px #fff"></div>
<div class="a" style="left:314px;top:401px;width:5px;height:1px;background:#000"></div>
<div class="a" style="left:323px;top:401px;width:3px;height:1px;background:repeating-linear-gradient(90deg,#000 0 1px,transparent 1px 2px)"></div>
<svg class="a" style="left:330px;top:396px" width="17" height="13" viewBox="0 0 17 13"><ellipse cx="6.5" cy="4" rx="5" ry="3.2" fill="#0050e0" stroke="#002060" stroke-width="0.6" transform="rotate(15 6.5 4)"/><path d="M0.5 6 L8 9 L1.5 12.5Z" fill="#00a050" stroke="#004020" stroke-width="0.6"/><path d="M8 9 L16 6 L14.5 12.5Z" fill="#e03030" stroke="#601010" stroke-width="0.6"/></svg>
<div class="a t " style="left:357px;top:396px;color:#fff;letter-spacing:-0.35px">FigPoly</div>
<div class="a t " style="left:494px;top:396px;color:#fff;letter-spacing:-0.1px">pointer</div>
<div class="a" style="left:330px;top:263px;width:1px;height:30px;background:repeating-linear-gradient(#000 0 1px,transparent 1px 2px)"></div>
<div class="a" style="left:330px;top:317px;width:1px;height:48px;background:repeating-linear-gradient(#000 0 1px,transparent 1px 2px)"></div>
<div class="a r2" style="left:309px;top:404px;width:227px;height:291px"></div>
<div class="a" style="left:312px;top:438px;width:221px;height:2px;box-shadow:inset 0 1px #808080,inset 0 -1px #fff"></div>
<div class="a" style="left:312px;top:527px;width:221px;height:2px;box-shadow:inset 0 1px #808080,inset 0 -1px #fff"></div>
<div class="a" style="left:312px;top:605px;width:221px;height:2px;box-shadow:inset 0 1px #808080,inset 0 -1px #fff"></div>
<div class="a t " style="left:341px;top:408px;"><u>Д</u>обавить...</div>
<div class="a t " style="left:476px;top:408px;">Ins</div>
<div class="a t " style="left:341px;top:421px;">Добавить <u>п</u>одъобъект...</div>
<div class="a t " style="left:476px;top:421px;">Alt+Ins</div>
<div class="a t " style="left:341px;top:446px;letter-spacing:0.35px"><b><u>Р</u>едактировать...</b></div>
<div class="a t " style="left:341px;top:464px;">Допо<u>л</u>нительные свойства...</div>
<div class="a t " style="left:341px;top:482px;">Свойства <u>ш</u>аблона...</div>
<div class="a t " style="left:341px;top:496px;"><u>Д</u>ерево шаблонов...</div>
<div class="a t " style="left:341px;top:510px;">Свойства <u>з</u>агрузки...</div>
<div class="a t " style="left:341px;top:535px;"><u>К</u>опировать</div>
<div class="a t " style="left:476px;top:535px;">Ctrl+Ins</div>
<div class="a t " style="left:341px;top:554px;"><u>В</u>ырезать</div>
<div class="a t " style="left:476px;top:554px;">Shift+Del</div>
<div class="a t " style="left:341px;top:572px;">Вс<u>т</u>авить</div>
<div class="a t " style="left:476px;top:572px;">Shift+Ins</div>
<div class="a t " style="left:341px;top:589px;">В ссылки</div>
<div class="a t " style="left:341px;top:612px;"><u>Т</u>ранслировать</div>
<div class="a t " style="left:476px;top:612px;">F9</div>
<div class="a t " style="left:341px;top:631px;"><u>С</u>татус...</div>
<div class="a t " style="left:476px;top:631px;">F7</div>
<div class="a t " style="left:341px;top:646px;">Св<u>о</u>йства...</div>
<div class="a t " style="left:341px;top:663px;">Св<u>я</u>зи...</div>
<div class="a t " style="left:341px;top:679px;">Оп<u>и</u>сание структуры...</div>
<svg class="a" style="left:0;top:0" width="1024" height="768" viewBox="0 0 1024 768"><path d="M166.5 168.5 H174 L177.5 172 V181.5 H166.5Z" fill="#d8d8f8" stroke="#202060" stroke-width="1"/><g transform="translate(176,180) scale(0.85)"><rect x="-0.8" y="3" width="1.6" height="6" fill="#603010"/><path d="M0 -7 C4 -7 7 -3 6 1 C6 4 3 5 0 4 C-3 5 -6 4 -6 1 C-7 -3 -4 -7 0 -7Z" fill="#1a6a3a" stroke="#0a3a1a" stroke-width="0.6"/><path d="M-3 -3l2 1M1 -4l2 2M-2 0l3 1M2 -1l2 1" stroke="#70b070" stroke-width="0.9"/></g><path d="M163 171h8M167 167v8M164 168l6 6M170 168l-6 6" stroke="#f0f000" stroke-width="1"/><circle cx="167" cy="171" r="1" fill="#e00000"/><g transform="translate(190,173)"><path d="M0.5 3.5 L0.5 12.5 L14.5 12.5 L14.5 1.5 L6 1.5 L5 0 L1 0Z" fill="#c8c8f0" stroke="#202060" stroke-width="0.9"/><path d="M0.5 12.5 L3 5.5 L17 5.5 L14.5 12.5Z" fill="#e0e0ff" stroke="#202060" stroke-width="0.9"/></g><g transform="translate(199,173) scale(0.85)"><rect x="-0.8" y="3" width="1.6" height="6" fill="#603010"/><path d="M0 -7 C4 -7 7 -3 6 1 C6 4 3 5 0 4 C-3 5 -6 4 -6 1 C-7 -3 -4 -7 0 -7Z" fill="#1a6a3a" stroke="#0a3a1a" stroke-width="0.6"/><path d="M-3 -3l2 1M1 -4l2 2M-2 0l3 1M2 -1l2 1" stroke="#70b070" stroke-width="0.9"/></g><path d="M215 175H220L217.5 178Z" fill="#000"/><g transform="translate(232,180) scale(0.9)"><rect x="-0.8" y="3" width="1.6" height="6" fill="#603010"/><path d="M0 -7 C4 -7 7 -3 6 1 C6 4 3 5 0 4 C-3 5 -6 4 -6 1 C-7 -3 -4 -7 0 -7Z" fill="#1a6a3a" stroke="#0a3a1a" stroke-width="0.6"/><path d="M-3 -3l2 1M1 -4l2 2M-2 0l3 1M2 -1l2 1" stroke="#70b070" stroke-width="0.9"/></g><rect x="232.5" y="167.5" width="12" height="12" fill="#c8c8f0" stroke="#202060"/><rect x="235" y="168" width="7" height="3" fill="#fff" stroke="#202060" stroke-width="0.6"/><rect x="235" y="174" width="7" height="5" fill="#fff" stroke="#202060" stroke-width="0.6"/><path d="M241 166l3 3M244 166l-3 3M240.5 167.5h4M242.5 165.5v4" stroke="#ff0000" stroke-width="1.2"/><rect x="229" y="186" width="6" height="1" fill="#000"/><g transform="translate(256,175) scale(0.9)"><rect x="-0.8" y="3" width="1.6" height="6" fill="#603010"/><path d="M0 -7 C4 -7 7 -3 6 1 C6 4 3 5 0 4 C-3 5 -6 4 -6 1 C-7 -3 -4 -7 0 -7Z" fill="#1a6a3a" stroke="#0a3a1a" stroke-width="0.6"/><path d="M-3 -3l2 1M1 -4l2 2M-2 0l3 1M2 -1l2 1" stroke="#70b070" stroke-width="0.9"/></g><rect x="252" y="184" width="6" height="1" fill="#000"/><path d="M263 180 L270 186" stroke="#0040c0" stroke-width="2.2"/><circle cx="261" cy="178" r="3.5" fill="#80e0f0" stroke="#004080" stroke-width="0.9"/><path d="M283 166V178" stroke="#a08040" stroke-width="1.5"/><path d="M283 171 C279 167 277 168 276 168 C278 171 281 172 283 171Z M283 173 C287 169 289 170 291 170 C289 173 286 174 283 173Z M283 169 C286 166 289 166 290 166 C288 169 285 170 283 169Z M283 175 C280 172 278 173 277 173 C279 176 281 177 283 175Z" fill="#40a040" stroke="#105010" stroke-width="0.5"/><g transform="translate(276,173)"><path d="M0.5 3.5 L0.5 12.5 L14.5 12.5 L14.5 1.5 L6 1.5 L5 0 L1 0Z" fill="#c8c8f0" stroke="#202060" stroke-width="0.9"/><path d="M0.5 12.5 L3 5.5 L17 5.5 L14.5 12.5Z" fill="#e0e0ff" stroke="#202060" stroke-width="0.9"/></g><path d="M340 168 L333 176 L338 177 L332 184 L343 175 L338 174 L344 168Z" fill="none" stroke="#c0b040" stroke-width="1" stroke-dasharray="1 1"/><path d="M339 170 L335 175 L339 176 L336 181" stroke="#f0e060" stroke-width="1.4" fill="none"/><rect x="358.5" y="167.5" width="9" height="11" fill="#fff" stroke="#808080" stroke-width="0.6"/><rect x="359" y="169" width="1.5" height="8" fill="#c08040"/><path d="M362 175 C362 171 365 169 367 169 C367 173 364 175 362 175Z" fill="#208040"/><g transform="translate(367,173)"><rect x="0.5" y="1.5" width="10" height="11" fill="#a07040" stroke="#503010" stroke-width="0.8"/><rect x="2.5" y="0" width="6" height="2.5" fill="#6040a0"/><rect x="2" y="4" width="7" height="7" fill="#fff"/><path d="M3 5h1M7 5h1M3 9h1M7 9h1" stroke="#404040"/></g><path d="M358 182H364V180L368 183L364 186V184H358Z" fill="#202090"/><rect x="382.5" y="167.5" width="9" height="11" fill="#fff" stroke="#808080" stroke-width="0.6"/><path d="M386 175 C386 171 389 169 391 169 C391 173 388 175 386 175Z" fill="#208040"/><path d="M384 168 L389 179M389 168 L384 179" stroke="#000" stroke-width="1.1"/><circle cx="384" cy="180" r="2" fill="none" stroke="#0000c0" stroke-width="1.1"/><circle cx="389" cy="180" r="2" fill="none" stroke="#0000c0" stroke-width="1.1"/><g transform="translate(391,173)"><rect x="0.5" y="1.5" width="10" height="11" fill="#a07040" stroke="#503010" stroke-width="0.8"/><rect x="2.5" y="0" width="6" height="2.5" fill="#6040a0"/><rect x="2" y="4" width="7" height="7" fill="#fff"/><path d="M3 5h1M7 5h1M3 9h1M7 9h1" stroke="#404040"/></g><path d="M382 183H388V181L392 184L388 187V185H382Z" fill="#c01010"/><rect x="406.5" y="167.5" width="10" height="11" fill="#e0e0e0" stroke="#a07040" stroke-width="0.8" stroke-dasharray="1 1"/><rect x="414.5" y="173.5" width="10" height="12" fill="#e8e8e8" stroke="#606060" stroke-width="0.8" stroke-dasharray="1 1"/><path d="M417 183 L422 176" stroke="#60a060" stroke-width="1.5"/><path d="M407 182h1M409 182h1M411 182h1M408 183h1M410 183h1M408 181h1M410 181h1" stroke="#4040a0"/><path d="M438 183 C434 177 437 170 443 168" fill="none" stroke="#208020" stroke-width="2.4" stroke-dasharray="3 1.2"/><path d="M439 182 C444 175 449 171 454 173" fill="none" stroke="#a04020" stroke-width="1.4"/><path d="M446 167 L449 170" stroke="#208020" stroke-width="2"/><path d="M450 179h6M453 176v6M451 177l4 4M455 177l-4 4" stroke="#f0f000" stroke-width="1.2"/><circle cx="453" cy="179" r="1.3" fill="#e04040"/><path d="M437 184 C441 186 445 186 448 184" stroke="#208020" stroke-width="1.8" fill="none"/><path d="M470 170 L468 186" stroke="#804020" stroke-width="2.6"/><path d="M464 168 L473 166 L476 171 L469 173 L465 173Z" fill="#303030" stroke="#000" stroke-width="0.5"/><rect x="484.5" y="167.5" width="9" height="11" fill="#fff" stroke="#808080" stroke-width="0.7"/><rect x="485" y="169" width="1.5" height="8" fill="#c08040"/><path d="M488 175 C488 171 491 169 493 169 C493 173 490 175 488 175Z" fill="#208040"/><rect x="492.5" y="175.5" width="10" height="11" fill="#fff" stroke="#808080" stroke-width="0.7"/><rect x="493" y="177" width="1.5" height="8" fill="#c08040"/><path d="M496 183 C496 179 499 177 501 177 C501 181 498 183 496 183Z" fill="#208040"/><path d="M493 186.5H503V176" stroke="#404040" fill="none"/><path d="M514 168 L526 180" stroke="#000" stroke-width="3"/><path d="M515 169 L526 180" stroke="#60a0c0" stroke-width="1"/><path d="M515 176 L522 183 L514 185Z" fill="#2040e0"/><circle cx="527" cy="175" r="4" fill="#a0a040"/><rect x="522" y="178" width="11" height="8" fill="#e00020" stroke="#600010" stroke-width="0.6"/><g fill="none" stroke="#909090" stroke-width="1"><rect x="540.5" y="167.5" width="5" height="6"/><rect x="551.5" y="167.5" width="5" height="6"/><rect x="545.5" y="178.5" width="6" height="5"/><path d="M543 173.5V176.5H554V173.5M548.5 176.5V178.5M538 185.5H559"/></g><g stroke="#fff" stroke-width="1" fill="none"><path d="M541.5 174.5h5M552.5 174.5h5M546.5 184.5h6"/></g><g transform="translate(572,177) rotate(-40) scale(0.55)">
<path d="M-7 -6l-4 -3M-8 0h-5M-7 6l-4 4M7 -6l4 -3M8 0h5M7 6l4 4M-2 -11l-3 -5M2 -11l3 -5" stroke="#000" stroke-width="1.6" fill="none"/>
<ellipse cx="0" cy="2" rx="7.5" ry="9.5" fill="#f0e040" stroke="#000" stroke-width="1.2"/>
<path d="M0 -7V11M-5 0h10" stroke="#a09010" stroke-width="1"/>
<ellipse cx="0" cy="-9" rx="4" ry="3" fill="#f0e040" stroke="#000"/>
<circle cx="2" cy="-10" r="1.2" fill="#c00000"/></g><rect x="587.5" y="167.5" width="13" height="13" fill="#fff" stroke="#404040" stroke-width="0.8"/><rect x="587.5" y="167.5" width="13" height="1.8" fill="#000080"/><rect x="592.5" y="176.5" width="7" height="5" fill="#8ac0e0" stroke="#404040" stroke-width="0.8"/><rect x="594.5" y="179.5" width="7" height="5" fill="#8ac0e0" stroke="#404040" stroke-width="0.8"/><rect x="597.5" y="182.5" width="7" height="5" fill="#c0c0c0" stroke="#404040" stroke-width="0.8"/><circle cx="625" cy="179" r="3" fill="#80f0f0" stroke="#000" stroke-width="1"/><circle cx="632" cy="179" r="3" fill="#80f0f0" stroke="#000" stroke-width="1"/><path d="M628 179h1M622 178 L625 172M635 178 L638 172" stroke="#000" stroke-width="1" fill="none"/></svg>
<svg class="a" style="left:0;top:0" width="1024" height="768" viewBox="0 0 1024 768"><g fill="#000"><rect x="238" y="200" width="5" height="7"/><rect x="245" y="200" width="5" height="7"/><rect x="239" y="197" width="3" height="4"/><rect x="246" y="197" width="3" height="4"/><rect x="242" y="201" width="4" height="3"/></g><g fill="#fff"><rect x="239" y="202" width="1" height="1"/><rect x="246" y="202" width="1" height="1"/><rect x="240" y="205" width="1" height="1"/><rect x="247" y="205" width="1" height="1"/></g><path d="M263 197 L268.5 202.5 L266 202.5 L266 206 L261 206 L261 202.5 L258 202.5Z" fill="#8090f0" stroke="#304080" stroke-width="0.6"/><g transform="translate(272,202) scale(0.75)"><rect x="-0.8" y="3" width="1.6" height="6" fill="#603010"/><path d="M0 -7 C4 -7 7 -3 6 1 C6 4 3 5 0 4 C-3 5 -6 4 -6 1 C-7 -3 -4 -7 0 -7Z" fill="#1a6a3a" stroke="#0a3a1a" stroke-width="0.6"/><path d="M-3 -3l2 1M1 -4l2 2M-2 0l3 1M2 -1l2 1" stroke="#70b070" stroke-width="0.9"/></g><path d="M283.5 199 L286 199 L286 197 L290 202 L286 207 L286 205 L283.5 205Z" fill="#6060e0" stroke="#303080" stroke-width="0.6"/><rect x="291.5" y="197.5" width="9" height="7" fill="#1060f0" stroke="#808080" stroke-width="0.8"/><path d="M294 206.5h5" stroke="#808080"/><path d="M301 198v6" stroke="#606060"/><rect x="856.5" y="198.5" width="7" height="7" fill="#fff" stroke="#000" stroke-width="1.2"/><rect x="858" y="201" width="4" height="2" fill="#000"/><path d="M881 197 L885.5 201.5 L883 201.5 L883 205 L879 205 L879 201.5 L876.5 201.5Z" fill="#0000ff"/><path d="M888 207 L892 202.5 L890 202.5 L890 199 L886 199 L886 202.5 L883.5 202.5Z" fill="#ff0000"/><path d="M905 202.5 L913.5 205.5" stroke="#0030c0" stroke-width="2.2"/><circle cx="902.5" cy="201" r="3" fill="#60f0f0" stroke="#606060" stroke-width="0.8"/></svg>
<svg class="a" style="left:0;top:0" width="1024" height="768" viewBox="0 0 1024 768"><path d="M322 455 C321 450 325 445 331 445 C331 451 327 455 322 455Z" fill="#10a020" stroke="#087010" stroke-width="0.6"/><path d="M317 457.5 L322 454" stroke="#c08020" stroke-width="1.2" stroke-dasharray="1.2 0.6"/><path d="M327.5 451.5h3M329 451.5v7M327.5 458.5h3" stroke="#000" stroke-width="1"/><path d="M318.5 467 C319 463 324 463 326 467M318.5 467 L321 474" stroke="#404040" stroke-width="0.8" fill="none"/><circle cx="327.5" cy="470" r="2.6" fill="#f04020"/><circle cx="324" cy="468" r="1.2" fill="#10c010"/><circle cx="329" cy="467" r="1" fill="#10c010"/><circle cx="323" cy="476" r="2.6" fill="#1080e0" stroke="#400080" stroke-width="0.5"/><circle cx="319.5" cy="474.5" r="1.1" fill="#10c010"/><path d="M322 472.5l2 -1" stroke="#10c010"/><path d="M330.5 471.5h3M332 471.5v7M330.5 478.5h3" stroke="#000" stroke-width="1"/><rect x="317.5" y="533.5" width="8" height="8" fill="#fff" stroke="#606060" stroke-width="1"/><path d="M319 535v6" stroke="#e0a020"/><path d="M320 540 C320 537 322 535 324 535 C324 538 322 540 320 540Z" fill="#108040"/><rect x="324.5" y="539.5" width="7" height="8" fill="#fff" stroke="#7a6020" stroke-width="1"/><rect x="326" y="538.5" width="4" height="1.5" fill="#402080"/><path d="M326 542h1M329 542h1M326 545h1M329 545h1" stroke="#e0a0a0"/><path d="M318 545.5h4M320.5 543.5l2 2l-2 2" stroke="#3010a0" stroke-width="1.3" fill="none"/><rect x="317.5" y="552.5" width="8" height="8" fill="#fff" stroke="#606060" stroke-width="1"/><path d="M319 554v6" stroke="#e0a020"/><path d="M320 559 C320 556 322 554 324 554 C324 557 322 559 320 559Z" fill="#108040"/><path d="M319 553 L323 562M322 553 L318 562" stroke="#000" stroke-width="0.9"/><circle cx="318" cy="561" r="1.5" fill="none" stroke="#0000c0"/><circle cx="322" cy="561" r="1.5" fill="none" stroke="#0000c0"/><rect x="324.5" y="558.5" width="7" height="8" fill="#fff" stroke="#7a6020" stroke-width="1"/><rect x="326" y="557.5" width="4" height="1.5" fill="#402080"/><path d="M326 561h1M329 561h1M326 564h1M329 564h1" stroke="#e0a0a0"/><path d="M318 565h4M320.5 563l2 2l-2 2" stroke="#c00000" stroke-width="1.3" fill="none"/><rect x="317.5" y="571.5" width="8" height="9" fill="#fff" stroke="#c08040" stroke-width="1"/><rect x="320" y="570.5" width="4" height="1.5" fill="#402080"/><rect x="324.5" y="576.5" width="8" height="8" fill="#fff" stroke="#606060" stroke-width="1"/><path d="M326 578v6" stroke="#e0a020"/><path d="M327 583 C327 580 329 578 331 578 C331 581 329 583 327 583Z" fill="#108040"/><path d="M318 583.5h5M321.5 581.5l2 2l-2 2" stroke="#0010a0" stroke-width="1.3" fill="none"/><rect x="317.5" y="612.5" width="9" height="8" fill="#fff" stroke="#000" stroke-width="1.2"/><path d="M319 615h2M322 615h3M319 617h5M319 619h2M322 619h2" stroke="#606060" stroke-width="0.8"/><path d="M327 619h4v3" stroke="#000" fill="none"/><path d="M329.5 621.5h3l-1.5 1.5Z" fill="#000"/><path d="M318 624.5v2M320 624.5h1.5v2h-1.5zM323.5 624.5v2M325.5 624.5h1.5v2h-1.5zM329 624.5v2" stroke="#404040" stroke-width="0.8" fill="none"/><path d="M319.5 637 V631" stroke="#008000" stroke-width="1.2"/><path d="M317.5 632.5 L319.5 629.5 L321.5 632.5Z" fill="#008000"/><path d="M319.5 637 V643" stroke="#ff0000" stroke-width="1.2"/><path d="M317.5 641 L319.5 644 L321.5 641Z" fill="#ff0000"/><path d="M322 636 L326 632" stroke="#800080" stroke-width="1"/><path d="M324.5 631 L327 630.5 L326.5 633Z" fill="#800080"/><path d="M322 637.5 H328" stroke="#0000ff" stroke-width="1.2"/><path d="M327 635.5 L330 637.5 L327 639.5Z" fill="#0000ff"/><path d="M322 639 L326 643" stroke="#808000" stroke-width="1"/><path d="M324.5 643.5 L327 644 L326.5 641.5Z" fill="#808000"/><g fill="none" stroke="#404040" stroke-width="0.9"><path d="M318 672 L324 665 L327 665.5 L327 668 L321 675 L318 674.5Z" stroke-dasharray="1 0.6"/><path d="M322 672 L328 665 L331 665.5 L331 668 L325 675 L322 674.5Z" stroke-dasharray="1 0.6"/></g></svg>
<svg class="a" style="left:0;top:0" width="1024" height="768" viewBox="0 0 1024 768"><g transform="translate(19,47) scale(0.8)"><rect x="-0.8" y="3" width="1.6" height="6" fill="#603010"/><path d="M0 -7 C4 -7 7 -3 6 1 C6 4 3 5 0 4 C-3 5 -6 4 -6 1 C-7 -3 -4 -7 0 -7Z" fill="#1a6a3a" stroke="#0a3a1a" stroke-width="0.6"/><path d="M-3 -3l2 1M1 -4l2 2M-2 0l3 1M2 -1l2 1" stroke="#70b070" stroke-width="0.9"/></g><path d="M5.5 74 V68 C5.5 65.5 8 65.5 11 66" stroke="#e00000" stroke-width="1.2" fill="none"/><path d="M10 64.5 L13 67 L10 69Z" fill="#e00000"/><rect x="11" y="70" width="8" height="2" fill="#000080"/><rect x="19" y="70" width="5" height="2" fill="#808080"/><rect x="19.5" y="70" width="1" height="1" fill="#fff"/><rect x="21.5" y="70" width="1" height="1" fill="#fff"/><path d="M24.5 70v9" stroke="#000"/><rect x="8" y="74" width="8" height="2" fill="#000080"/><rect x="16" y="74" width="6" height="2" fill="#808080"/><rect x="16.5" y="74" width="1" height="1" fill="#fff"/><rect x="18.5" y="74" width="1" height="1" fill="#fff"/><path d="M22.5 74v9" stroke="#000"/><rect x="5" y="78" width="9" height="2" fill="#000080"/><rect x="14" y="78" width="5" height="2" fill="#808080"/><rect x="14.5" y="78" width="1" height="1" fill="#fff"/><rect x="16.5" y="78" width="1" height="1" fill="#fff"/><rect x="5" y="80" width="14" height="5" fill="#fff"/><path d="M19.5 78v7" stroke="#000"/><circle cx="15.5" cy="92.5" r="1.2" fill="#b0a020" stroke="#000" stroke-width="0.6"/><path d="M9.5 103.5 C12.5 101 12.5 94 15.5 94 C18.5 94 18.5 101 21.5 103.5Z" fill="#c0b020" stroke="#000" stroke-width="0.8"/><path d="M13 99 L12 102" stroke="#f0d040" stroke-width="1"/><circle cx="15.5" cy="104.5" r="1" fill="#000"/><rect x="7.5" y="116.5" width="16" height="13" fill="#2080e0" stroke="#000" stroke-width="1"/><ellipse cx="14" cy="123" rx="6" ry="5" fill="#f0f0d0"/><rect x="11" y="120" width="6" height="7" fill="#fff" stroke="#000" stroke-width="1"/><path d="M14 124 L21 116" stroke="#e0a020" stroke-width="1.6"/><circle cx="21.5" cy="115.5" r="1" fill="#ff4040"/><g transform="translate(6,144) scale(0.6)"><g transform="scale(1)">
<path d="M5 6 L29 31" stroke="#000" stroke-width="4"/><path d="M5 6 L29 31" stroke="#c08020" stroke-width="2.4"/>
<path d="M1 11 L10 2 L15 6 L6 15Z" fill="#202020" stroke="#000" stroke-width="0.8"/><path d="M5 9 L9 5" stroke="#808080" stroke-width="0.8"/>
<path d="M6 27 L23 11" stroke="#000" stroke-width="5"/><path d="M6 27 L23 11" stroke="#f0f0f0" stroke-width="3"/>
<path d="M19 9 C19 4 25 2 29 4 L25 8 L27 11 L31 8 C32 13 28 16 23 15Z" fill="#f0f0f0" stroke="#000" stroke-width="1"/>
<path d="M11 28 C11 32 5 34 2 31 L6 28 L4 25 L1 27 C0 22 4 19 9 21Z" fill="#f0f0f0" stroke="#000" stroke-width="1"/>
<path d="M21 19 L29 12" stroke="#000" stroke-width="2.6"/><path d="M21 19 L29 12" stroke="#c0c0c0" stroke-width="1.2"/>
<path d="M12 27 L21 19" stroke="#000" stroke-width="6"/><path d="M12 27 L21 19" stroke="#ff1010" stroke-width="4"/></g></g><rect x="7.5" y="172.5" width="15" height="15" fill="#fff" stroke="#000" stroke-width="1"/><rect x="7" y="172" width="16" height="1.5" fill="#000080"/><path d="M15 174v11M8 185.5h14" stroke="#000"/><path d="M9 181h5" stroke="#0000c0"/><path d="M9 177h1M11 177h1M17 177h2M17 179h2M17 181h3M9 183h1M12 183h1" stroke="#404040"/><g transform="translate(15,204) rotate(-40) scale(0.55)">
<path d="M-7 -6l-4 -3M-8 0h-5M-7 6l-4 4M7 -6l4 -3M8 0h5M7 6l4 4M-2 -11l-3 -5M2 -11l3 -5" stroke="#000" stroke-width="1.6" fill="none"/>
<ellipse cx="0" cy="2" rx="7.5" ry="9.5" fill="#f0e040" stroke="#000" stroke-width="1.2"/>
<path d="M0 -7V11M-5 0h10" stroke="#a09010" stroke-width="1"/>
<ellipse cx="0" cy="-9" rx="4" ry="3" fill="#f0e040" stroke="#000"/>
<circle cx="2" cy="-10" r="1.2" fill="#c00000"/></g><rect x="7.5" y="222.5" width="15" height="11" rx="1" fill="#008080" stroke="#000080" stroke-width="1.2"/><rect x="10" y="224" width="7" height="2.5" fill="#fff"/><path d="M10 228.5h1M12 228.5h1M14 228.5h1M16 228.5h1M18 228.5h1M10 231h1M12 231h1M14 231h1M16 231h1M18 231h2" stroke="#fff"/><g transform="translate(15,261) rotate(-40) scale(0.55)">
<path d="M-7 -6l-4 -3M-8 0h-5M-7 6l-4 4M7 -6l4 -3M8 0h5M7 6l4 4M-2 -11l-3 -5M2 -11l3 -5" stroke="#000" stroke-width="1.6" fill="none"/>
<ellipse cx="0" cy="2" rx="7.5" ry="9.5" fill="#f0e040" stroke="#000" stroke-width="1.2"/>
<path d="M0 -7V11M-5 0h10" stroke="#a09010" stroke-width="1"/>
<ellipse cx="0" cy="-9" rx="4" ry="3" fill="#f0e040" stroke="#000"/>
<circle cx="2" cy="-10" r="1.2" fill="#c00000"/></g><g transform="translate(7,277) scale(0.55)"><g transform="scale(1)">
<path d="M5 6 L29 31" stroke="#000" stroke-width="4"/><path d="M5 6 L29 31" stroke="#c08020" stroke-width="2.4"/>
<path d="M1 11 L10 2 L15 6 L6 15Z" fill="#202020" stroke="#000" stroke-width="0.8"/><path d="M5 9 L9 5" stroke="#808080" stroke-width="0.8"/>
<path d="M6 27 L23 11" stroke="#000" stroke-width="5"/><path d="M6 27 L23 11" stroke="#f0f0f0" stroke-width="3"/>
<path d="M19 9 C19 4 25 2 29 4 L25 8 L27 11 L31 8 C32 13 28 16 23 15Z" fill="#f0f0f0" stroke="#000" stroke-width="1"/>
<path d="M11 28 C11 32 5 34 2 31 L6 28 L4 25 L1 27 C0 22 4 19 9 21Z" fill="#f0f0f0" stroke="#000" stroke-width="1"/>
<path d="M21 19 L29 12" stroke="#000" stroke-width="2.6"/><path d="M21 19 L29 12" stroke="#c0c0c0" stroke-width="1.2"/>
<path d="M12 27 L21 19" stroke="#000" stroke-width="6"/><path d="M12 27 L21 19" stroke="#ff1010" stroke-width="4"/></g></g><g transform="translate(7,301) scale(0.5)"><rect x="0" y="0" width="32" height="32" fill="#fff"/><path d="M0 31H32M31 0V32" stroke="#a0a0a0" stroke-width="2"/><path d="M0 29.5H30M29.5 0V30" stroke="#e0e0e0" stroke-width="1"/>
<path d="M3 6 L6 3 L13 9 L15 7 L15 14 L8 14 L10 12Z" fill="#e00000" stroke="#000" stroke-width="0.8"/>
<path d="M28 6 L25 3 L18 9 L16 7 L16 14 L23 14 L21 12Z" fill="#00d000" stroke="#000" stroke-width="0.8"/>
<path d="M15.5 15 L21 21 L18 21 L18 28 L13 28 L13 21 L10 21Z" fill="#0000e0" stroke="#000" stroke-width="0.8"/></g></svg>
<div class="a" style="left:0;top:766px;width:1024px;height:1px;background:#dcd8ec"></div>
<div class="a" style="left:0;top:767px;width:1024px;height:1px;background:#fff"></div></body></html>
